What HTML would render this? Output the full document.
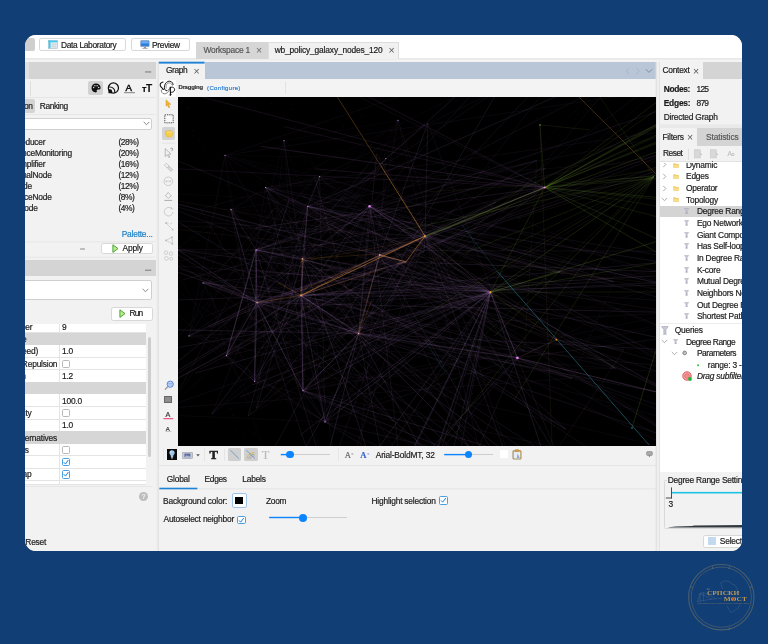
<!DOCTYPE html>
<html lang="en"><head><meta charset="utf-8"><title>Gephi – wb_policy_galaxy_nodes_120</title>
<style>
html,body{margin:0;padding:0;}
body{width:768px;height:644px;background:#113e74;overflow:hidden;position:relative;font-family:"Liberation Sans",sans-serif;font-size:8.4px;color:#1a1a1a;}
#win{position:absolute;left:25px;top:35px;width:717px;height:515.5px;border-radius:11px;overflow:hidden;background:#f2f2f2;}
#in{will-change:transform;}
.t{-webkit-text-stroke:0.18px currentColor;}
#in{position:absolute;left:-25px;top:-35px;width:768px;height:644px;}
#in div,#in svg,.abs{position:absolute;box-sizing:border-box;}
.t{white-space:nowrap;}
.btn{background:#fff;border:0.7px solid #d8d8d8;border-radius:2.2px;}
.cb{background:#fff;border:0.7px solid #b9b9b9;border-radius:1.6px;}
.cbc{background:#fff;border:0.8px solid #4a9fe0;border-radius:1.6px;}
</style></head><body>
<div id="win"><div id="in">
<div style="left:25.00px;top:35.00px;width:718.00px;height:23.20px;background:#fff;"></div>
<svg style="left:24px;top:57px;" width="720" height="4" viewBox="0 0 720 4"><rect x="1.00" y="1.00" width="718.00" height="1.90" fill="#e9e9e9"/></svg>
<svg style="left:24px;top:58px;" width="720" height="6" viewBox="0 0 720 6"><rect x="1.00" y="1.80" width="718.00" height="2.40" fill="#f3f3f3"/></svg>
<div style="left:20.00px;top:38.30px;width:14.80px;height:13.10px;background:#cfcfcf;border-radius:2px;"></div>
<div class="btn" style="left:39.20px;top:38.20px;width:87.10px;height:13.30px;"></div>
<svg style="left:48.00px;top:39.70px;" width="10" height="9" viewBox="0 0 10 9"><rect x="0.3" y="0.3" width="9.4" height="8.4" fill="#e3eaee" stroke="#a4b0b6" stroke-width="0.5"/><rect x="0.6" y="0.6" width="8.8" height="1.7" fill="#3fcaf4"/><rect x="0.6" y="0.6" width="1.9" height="7.8" fill="#3fcaf4"/><path d="M4.8 2.4V8.4M7.1 2.4V8.4M2.5 4.4H9.4M2.5 6.4H9.4" stroke="#c2ccd1" stroke-width="0.4"/></svg>
<div class="t" style="left:60.90px;top:41.10px;font-size:8.4px;line-height:8.4px;letter-spacing:-0.303px;">Data Laboratory</div>
<div class="btn" style="left:130.60px;top:38.20px;width:59.20px;height:13.30px;"></div>
<svg style="left:139.50px;top:40.30px;" width="10" height="10" viewBox="0 0 10 10"><rect x="0.6" y="0.6" width="8.6" height="6" rx="0.6" fill="#2f7fe0" stroke="#8899aa" stroke-width="0.5"/><rect x="1.2" y="1.2" width="7.4" height="2.2" fill="#6fb0f5"/><rect x="3.8" y="6.8" width="2.4" height="1.4" fill="#999"/><rect x="2.4" y="8.1" width="5.2" height="0.9" fill="#aaa"/></svg>
<div class="t" style="left:151.90px;top:41.10px;font-size:8.4px;line-height:8.4px;letter-spacing:-0.263px;">Preview</div>
<div style="left:196.30px;top:41.90px;width:71.70px;height:17.10px;background:#d6d6d6;"></div>
<div class="t" style="left:203.40px;top:46.10px;font-size:8.4px;line-height:8.4px;color:#555;letter-spacing:-0.197px;">Workspace 1</div>
<div class="t" style="left:255.90px;top:45.05px;font-size:10.5px;line-height:10.5px;color:#6a6a6a;-webkit-text-stroke:0;letter-spacing:-0.2px;">×</div>
<div style="left:268.00px;top:41.90px;width:131.40px;height:17.10px;background:#f1f1f1;border:0.6px solid #dddddd;border-bottom:none;"></div>
<div class="t" style="left:274.70px;top:46.10px;font-size:8.4px;line-height:8.4px;letter-spacing:-0.151px;">wb_policy_galaxy_nodes_120</div>
<div class="t" style="left:388.40px;top:45.05px;font-size:10.5px;line-height:10.5px;color:#5a5a5a;-webkit-text-stroke:0;letter-spacing:-0.2px;">×</div>
<div style="left:25.00px;top:62.00px;width:130.60px;height:489.00px;background:#f2f2f2;"></div>
<div style="left:155.80px;top:62.00px;width:1.80px;height:489.00px;background:#efefef;"></div>
<svg style="left:156px;top:61px;" width="4" height="491" viewBox="0 0 4 491"><rect x="1.60" y="1.00" width="1.30" height="489.00" fill="#e2e2e2"/></svg>
<div style="left:29.40px;top:62.20px;width:126.20px;height:17.20px;background:#d4d4d4;"></div>
<div style="left:25.00px;top:62.20px;width:3.60px;height:17.20px;background:#e0e0e0;"></div>
<svg style="left:144px;top:70px;" width="9" height="4" viewBox="0 0 9 4"><rect x="1.00" y="1.30" width="6.30" height="1.30" fill="#8e8e8e"/></svg>
<svg style="left:29px;top:80px;" width="3" height="17" viewBox="0 0 3 17"><rect x="1.20" y="1.50" width="0.70" height="14.50" fill="#d6d6d6"/></svg>
<div style="left:88.10px;top:81.10px;width:14.70px;height:13.90px;background:#d2d2d2;border-radius:2px;"></div>
<svg style="left:90.60px;top:83.10px;" width="10" height="10" viewBox="0 0 10 10"><path d="M5 0.6C2.4 0.6 0.5 2.6 0.5 5c0 2.5 1.9 4.4 4.3 4.4 0.9 0 1.2-0.6 1-1.2-0.3-0.8 0-1.6 1-1.6h1.2c1 0 1.6-0.8 1.6-1.8C9.6 2.4 7.6 0.6 5 0.6z" fill="#111"/><circle cx="2.6" cy="4.6" r="0.75" fill="#d2d2d2"/><circle cx="3.9" cy="2.7" r="0.75" fill="#d2d2d2"/><circle cx="6.1" cy="2.7" r="0.75" fill="#d2d2d2"/><circle cx="7.6" cy="4.4" r="0.75" fill="#d2d2d2"/></svg>
<svg style="left:106.60px;top:81.90px;" width="13" height="12.35" viewBox="0 0 12 11.4"><circle cx="5.9" cy="5.6" r="4.7" fill="none" stroke="#111" stroke-width="1.15"/><path d="M1.3 10.3V7.3a0.6 0.6 0 0 1 0.6-0.6h0.9a2 2 0 0 1 2 2v1.6z" fill="#111"/><path d="M1.6 4.6h1.2a4.4 4.4 0 0 1 4.4 4.4v1.2" fill="none" stroke="#111" stroke-width="1.05"/></svg>
<div class="t" style="left:125.40px;top:82.95px;font-size:9.7px;line-height:9.7px;color:#111;-webkit-text-stroke:0.5px #111;letter-spacing:-0.2px;">A</div>
<svg style="left:123px;top:91px;" width="13" height="4" viewBox="0 0 13 4"><rect x="1.00" y="1.10" width="11.00" height="1.10" fill="#8c8c8c"/></svg>
<div class="t" style="left:142.00px;top:84.70px;font-size:9.2px;line-height:9.2px;font-weight:bold;color:#111;letter-spacing:-0.2px;">т</div>
<div class="t" style="left:146.00px;top:83.75px;font-size:10.1px;line-height:10.1px;font-weight:bold;color:#111;letter-spacing:-0.2px;">T</div>
<svg style="left:24px;top:96px;" width="133" height="3" viewBox="0 0 133 3"><rect x="1.00" y="1.00" width="130.60" height="0.60" fill="#dedede"/></svg>
<div style="left:20.00px;top:98.80px;width:15.00px;height:13.80px;background:#d4d4d4;border-radius:2px;"></div>
<div class="t" style="right:735.20px;top:102.10px;font-size:8.4px;line-height:8.4px;letter-spacing:-0.2px;">Partition</div>
<div class="t" style="left:39.80px;top:102.10px;font-size:8.4px;line-height:8.4px;letter-spacing:-0.387px;">Ranking</div>
<svg style="left:24px;top:113px;" width="133" height="3" viewBox="0 0 133 3"><rect x="1.00" y="1.00" width="130.60" height="0.60" fill="#dedede"/></svg>
<div style="left:20.00px;top:117.60px;width:132.40px;height:12.70px;background:#fff;border:0.6px solid #cfcfcf;border-radius:2px;"></div>
<svg style="left:142.60px;top:121.40px;" width="7" height="5" viewBox="0 0 7 5"><path d="M0.7 0.9L3.5 3.7L6.3 0.9" fill="none" stroke="#555" stroke-width="0.7"/></svg>
<div class="t" style="right:722.60px;top:138.10px;font-size:8.4px;line-height:8.4px;letter-spacing:-0.2px;">Producer</div>
<div class="t" style="left:118.50px;top:138.10px;font-size:8.4px;line-height:8.4px;letter-spacing:-0.427px;">(28%)</div>
<div class="t" style="right:696.00px;top:149.10px;font-size:8.4px;line-height:8.4px;letter-spacing:-0.2px;">ComplianceMonitoring</div>
<div class="t" style="left:118.50px;top:149.10px;font-size:8.4px;line-height:8.4px;letter-spacing:-0.427px;">(20%)</div>
<div class="t" style="right:722.60px;top:160.10px;font-size:8.4px;line-height:8.4px;letter-spacing:-0.2px;">Amplifier</div>
<div class="t" style="left:118.50px;top:160.10px;font-size:8.4px;line-height:8.4px;letter-spacing:-0.427px;">(16%)</div>
<div class="t" style="right:716.30px;top:171.10px;font-size:8.4px;line-height:8.4px;letter-spacing:-0.2px;">TerminalNode</div>
<div class="t" style="left:118.50px;top:171.10px;font-size:8.4px;line-height:8.4px;letter-spacing:-0.427px;">(12%)</div>
<div class="t" style="right:736.10px;top:182.10px;font-size:8.4px;line-height:8.4px;letter-spacing:-0.2px;">Node</div>
<div class="t" style="left:118.50px;top:182.10px;font-size:8.4px;line-height:8.4px;letter-spacing:-0.427px;">(12%)</div>
<div class="t" style="right:716.30px;top:193.10px;font-size:8.4px;line-height:8.4px;letter-spacing:-0.2px;">SourceNode</div>
<div class="t" style="left:118.50px;top:193.10px;font-size:8.4px;line-height:8.4px;letter-spacing:-0.479px;">(8%)</div>
<div class="t" style="right:730.30px;top:204.10px;font-size:8.4px;line-height:8.4px;letter-spacing:-0.2px;">Anode</div>
<div class="t" style="left:118.50px;top:204.10px;font-size:8.4px;line-height:8.4px;letter-spacing:-0.479px;">(4%)</div>
<div class="t" style="left:121.70px;top:230.10px;font-size:8.4px;line-height:8.4px;color:#1b7fc4;letter-spacing:-0.206px;">Palette...</div>
<svg style="left:24px;top:240px;" width="133" height="4" viewBox="0 0 133 4"><rect x="1.00" y="1.60" width="130.60" height="0.60" fill="#dedede"/></svg>
<div style="left:79.80px;top:247.80px;width:4.80px;height:2.60px;background:#bdbdbd;border-radius:0.6px;"></div>
<div class="btn" style="left:101.20px;top:243.10px;width:51.40px;height:11.40px;"></div>
<svg style="left:112.20px;top:243.50px;" width="7" height="9.2" viewBox="0 0 7 9.2"><path d="M0.9 0.8L6 4.6L0.9 8.4z" fill="#b9f08a" stroke="#3c9a2c" stroke-width="0.9" stroke-linejoin="round"/></svg>
<div class="t" style="left:122.50px;top:244.10px;font-size:8.4px;line-height:8.4px;letter-spacing:-0.128px;">Apply</div>
<svg style="left:24px;top:255px;" width="133" height="4" viewBox="0 0 133 4"><rect x="1.00" y="1.80" width="130.60" height="0.60" fill="#dedede"/></svg>
<div style="left:25.00px;top:260.00px;width:130.60px;height:16.30px;background:#d4d4d4;"></div>
<svg style="left:144px;top:268px;" width="9" height="4" viewBox="0 0 9 4"><rect x="1.00" y="1.60" width="6.30" height="1.30" fill="#8e8e8e"/></svg>
<div style="left:20.00px;top:280.40px;width:132.40px;height:19.80px;background:#fff;border:0.6px solid #cfcfcf;border-radius:2px;"></div>
<svg style="left:142.00px;top:288.00px;" width="7" height="5" viewBox="0 0 7 5"><path d="M0.7 0.9L3.5 3.7L6.3 0.9" fill="none" stroke="#555" stroke-width="0.7"/></svg>
<div class="btn" style="left:111.20px;top:307.00px;width:41.40px;height:13.60px;"></div>
<svg style="left:118.50px;top:308.60px;" width="7" height="9.2" viewBox="0 0 7 9.2"><path d="M0.9 0.8L6 4.6L0.9 8.4z" fill="#b9f08a" stroke="#3c9a2c" stroke-width="0.9" stroke-linejoin="round"/></svg>
<div class="t" style="left:129.40px;top:309.10px;font-size:8.4px;line-height:8.4px;letter-spacing:-0.755px;">Run</div>
<div style="left:25.00px;top:323.50px;width:121.00px;height:161.10px;background:#fff;"></div>
<div style="left:25.00px;top:332.40px;width:121.00px;height:0.50px;background:#e4e4e4;"></div>
<div style="left:59.40px;top:323.50px;width:0.50px;height:9.40px;background:#e4e4e4;"></div>
<div class="t" style="right:735.60px;top:323.10px;font-size:8.4px;line-height:8.4px;letter-spacing:-0.2px;">Threads number</div>
<div class="t" style="left:62.00px;top:323.10px;font-size:8.4px;line-height:8.4px;letter-spacing:-0.2px;">9</div>
<div style="left:25.00px;top:332.90px;width:121.00px;height:12.30px;background:#d6d6d6;"></div>
<div class="t" style="right:741.50px;top:335.10px;font-size:8.4px;line-height:8.4px;letter-spacing:-0.2px;">Performance</div>
<div style="left:25.00px;top:357.00px;width:121.00px;height:0.50px;background:#e4e4e4;"></div>
<div style="left:59.40px;top:345.20px;width:0.50px;height:12.30px;background:#e4e4e4;"></div>
<div class="t" style="right:730.00px;top:347.10px;font-size:8.4px;line-height:8.4px;letter-spacing:-0.2px;">Tolerance (speed)</div>
<div class="t" style="left:62.00px;top:347.10px;font-size:8.4px;line-height:8.4px;letter-spacing:-0.2px;">1.0</div>
<div style="left:25.00px;top:369.30px;width:121.00px;height:0.50px;background:#e4e4e4;"></div>
<div style="left:59.40px;top:357.50px;width:0.50px;height:12.30px;background:#e4e4e4;"></div>
<div class="t" style="right:710.70px;top:360.10px;font-size:8.4px;line-height:8.4px;letter-spacing:-0.2px;">Approximate Repulsion</div>
<div class="cb" style="left:61.90px;top:359.70px;width:8.20px;height:8.20px;"></div>
<div style="left:25.00px;top:381.60px;width:121.00px;height:0.50px;background:#e4e4e4;"></div>
<div style="left:59.40px;top:369.80px;width:0.50px;height:12.30px;background:#e4e4e4;"></div>
<div class="t" style="right:742.40px;top:372.10px;font-size:8.4px;line-height:8.4px;letter-spacing:-0.2px;">Approximation</div>
<div class="t" style="left:62.00px;top:372.10px;font-size:8.4px;line-height:8.4px;letter-spacing:-0.2px;">1.2</div>
<div style="left:25.00px;top:382.10px;width:121.00px;height:12.30px;background:#d6d6d6;"></div>
<div class="t" style="right:746.00px;top:384.10px;font-size:8.4px;line-height:8.4px;letter-spacing:-0.2px;">Tuning</div>
<div style="left:25.00px;top:406.20px;width:121.00px;height:0.50px;background:#e4e4e4;"></div>
<div style="left:59.40px;top:394.40px;width:0.50px;height:12.30px;background:#e4e4e4;"></div>
<div class="t" style="right:746.00px;top:397.10px;font-size:8.4px;line-height:8.4px;letter-spacing:-0.2px;">Scaling</div>
<div class="t" style="left:62.00px;top:397.10px;font-size:8.4px;line-height:8.4px;letter-spacing:-0.2px;">100.0</div>
<div style="left:25.00px;top:418.50px;width:121.00px;height:0.50px;background:#e4e4e4;"></div>
<div style="left:59.40px;top:406.70px;width:0.50px;height:12.30px;background:#e4e4e4;"></div>
<div class="t" style="right:736.50px;top:409.10px;font-size:8.4px;line-height:8.4px;letter-spacing:-0.2px;">Stronger Gravity</div>
<div class="cb" style="left:61.90px;top:408.90px;width:8.20px;height:8.20px;"></div>
<div style="left:25.00px;top:430.80px;width:121.00px;height:0.50px;background:#e4e4e4;"></div>
<div style="left:59.40px;top:419.00px;width:0.50px;height:12.30px;background:#e4e4e4;"></div>
<div class="t" style="right:746.00px;top:421.10px;font-size:8.4px;line-height:8.4px;letter-spacing:-0.2px;">Gravity</div>
<div class="t" style="left:62.00px;top:421.10px;font-size:8.4px;line-height:8.4px;letter-spacing:-0.2px;">1.0</div>
<div style="left:25.00px;top:431.30px;width:121.00px;height:12.30px;background:#d6d6d6;"></div>
<div class="t" style="right:711.00px;top:434.10px;font-size:8.4px;line-height:8.4px;letter-spacing:-0.2px;">Behavior Alternatives</div>
<div style="left:25.00px;top:455.40px;width:121.00px;height:0.50px;background:#e4e4e4;"></div>
<div style="left:59.40px;top:443.60px;width:0.50px;height:12.30px;background:#e4e4e4;"></div>
<div class="t" style="right:739.20px;top:446.10px;font-size:8.4px;line-height:8.4px;letter-spacing:-0.2px;">Dissuade Hubs</div>
<div class="cb" style="left:61.90px;top:445.80px;width:8.20px;height:8.20px;"></div>
<div style="left:25.00px;top:467.70px;width:121.00px;height:0.50px;background:#e4e4e4;"></div>
<div style="left:59.40px;top:455.90px;width:0.50px;height:12.30px;background:#e4e4e4;"></div>
<div class="t" style="right:746.00px;top:458.10px;font-size:8.4px;line-height:8.4px;letter-spacing:-0.2px;">LinLog mode</div>
<div class="cbc" style="left:61.90px;top:458.10px;width:8.20px;height:8.20px;"></div>
<svg style="left:61.90px;top:458.10px;" width="8.2" height="8.2" viewBox="0 0 8.2 8.2"><path d="M1.9 4.3L3.5 6.1L6.4 2" fill="none" stroke="#1a84e6" stroke-width="1"/></svg>
<div style="left:25.00px;top:480.00px;width:121.00px;height:0.50px;background:#e4e4e4;"></div>
<div style="left:59.40px;top:468.20px;width:0.50px;height:12.30px;background:#e4e4e4;"></div>
<div class="t" style="right:736.50px;top:470.10px;font-size:8.4px;line-height:8.4px;letter-spacing:-0.2px;">Prevent Overlap</div>
<div class="cbc" style="left:61.90px;top:470.40px;width:8.20px;height:8.20px;"></div>
<svg style="left:61.90px;top:470.40px;" width="8.2" height="8.2" viewBox="0 0 8.2 8.2"><path d="M1.9 4.3L3.5 6.1L6.4 2" fill="none" stroke="#1a84e6" stroke-width="1"/></svg>
<div style="left:25.00px;top:484.10px;width:121.00px;height:0.50px;background:#e4e4e4;"></div>
<div style="left:59.40px;top:480.50px;width:0.50px;height:4.10px;background:#e4e4e4;"></div>
<div style="left:25px;top:480.50px;width:121px;height:4.10px;overflow:hidden;"><div class="t" style="right:115.00px;top:3.03px;font-size:8.4px;line-height:8.4px;">Edge Weight Influence</div><div class="t" style="left:37.00px;top:3.03px;font-size:8.4px;line-height:8.4px;">1.0</div></div>
<div style="left:147.80px;top:336.80px;width:3.00px;height:119.80px;background:#cdcdcd;border-radius:1.5px;"></div>
<svg style="left:24px;top:485px;" width="130" height="3" viewBox="0 0 130 3"><rect x="1.00" y="1.40" width="127.40" height="0.60" fill="#dedede"/></svg>
<div style="left:139.00px;top:491.50px;width:9.00px;height:9.00px;background:#bdbdbd;border-radius:50%;"></div>
<div class="t" style="left:141.60px;top:493.30px;font-size:7px;line-height:7px;color:#e8e8e8;font-weight:bold;">?</div>
<div class="t" style="left:25.30px;top:538.10px;font-size:8.4px;line-height:8.4px;letter-spacing:-0.2px;">Reset</div>
<div style="left:158.80px;top:62.00px;width:497.20px;height:17.40px;background:#b8c6d7;"></div>
<div style="left:158.80px;top:62.00px;width:45.80px;height:17.40px;background:#f2f2f2;"></div>
<svg style="left:157px;top:60px;" width="49" height="5" viewBox="0 0 49 5"><rect x="1.80" y="1.70" width="45.80" height="1.90" fill="#1b82d6"/></svg>
<div class="t" style="left:166.00px;top:66.10px;font-size:8.4px;line-height:8.4px;letter-spacing:-0.412px;">Graph</div>
<div class="t" style="left:193.50px;top:66.05px;font-size:10.5px;line-height:10.5px;color:#5a5a5a;-webkit-text-stroke:0;letter-spacing:-0.2px;">×</div>
<svg style="left:623.50px;top:66.50px;" width="30" height="8" viewBox="0 0 30 8"><path d="M5.4 0.8L2.2 4L5.4 7.2" fill="none" stroke="#a3b3c6" stroke-width="0.8"/><path d="M12 0.8L15.2 4L12 7.2" fill="none" stroke="#a3b3c6" stroke-width="0.8"/><path d="M21.8 2.2L25 5.4L28.2 2.2" fill="none" stroke="#6e7f92" stroke-width="0.8"/></svg>
<div style="left:158.80px;top:79.40px;width:497.20px;height:17.70px;background:#f3f3f3;"></div>
<div style="left:159.90px;top:79.90px;width:16.10px;height:16.70px;background:#fff;"></div>
<svg style="left:158.00px;top:78.00px;" width="20" height="20" viewBox="0 0 20 20"><g fill="none" stroke="#151515" stroke-linecap="round"><path d="M5 4C3.2 4.6 1.8 6.2 2.4 8C2.9 9.4 4.4 10.2 5.4 11.4" stroke-width="1.05"/><path d="M5.4 11.4C3.6 10.6 2.8 12.4 3.6 14.2C4.6 16.2 7.8 16.4 9.6 14.6C10.6 13.6 11.2 12.4 11.6 11.2" stroke-width="0.5"/><path d="M15.2 6.6C15 4 12.4 2.6 10 3.4C7.6 4.4 6.2 7.2 6.4 9.8C6.5 11.6 7.4 12.6 8.6 12.8" stroke-width="0.95"/><path d="M14.4 7.4C13.6 5 11.4 4.2 9.6 5.4C8.2 6.4 7.6 8.4 8.2 10.2" stroke-width="0.45"/><path d="M12.3 9.2L12.5 17.2" stroke-width="1.15"/><path d="M12.4 9.6C14.4 8.4 16.8 9.6 16.6 11.8C16.4 13.8 14.4 14.8 12.6 14.2" stroke-width="0.95"/><path d="M8.6 12.8C10 12.6 11.4 10.8 12.3 9.2M11.2 17L13.6 16.4" stroke-width="0.5"/></g></svg>
<div class="t" style="left:178.40px;top:85.35px;font-size:5.9px;line-height:5.9px;font-weight:bold;color:#333;letter-spacing:-0.171px;">Dragging</div>
<div class="t" style="left:207.10px;top:85.27px;font-size:6.05px;line-height:6.05px;color:#2d7fd0;letter-spacing:0.304px;">(Configure)</div>
<svg style="left:284px;top:80px;" width="3" height="15" viewBox="0 0 3 15"><rect x="1.40" y="1.50" width="0.60" height="12.50" fill="#d9d9d9"/></svg>
<div style="left:158.80px;top:97.10px;width:19.20px;height:348.50px;background:#f2f2f2;"></div>
<svg style="left:165.00px;top:99.20px;" width="7" height="10" viewBox="0 0 7 10"><path d="M1 0.8L1 7.2L2.5 5.9L3.7 8.8L4.8 8.3L3.6 5.5L5.8 5.3z" fill="#f4b62c" stroke="#c9923a" stroke-width="0.45" stroke-linejoin="round"/></svg>
<svg style="left:163.50px;top:114.00px;" width="10" height="10" viewBox="0 0 10 10"><rect x="0.8" y="0.8" width="8.4" height="8" fill="#f9f9f9" stroke="#222" stroke-width="0.8" stroke-dasharray="1.3 0.9"/></svg>
<div style="left:162.30px;top:127.00px;width:12.90px;height:13.00px;background:#d3d3d3;border-radius:2px;"></div>
<svg style="left:164.20px;top:129.40px;" width="10" height="9" viewBox="0 0 10 9"><path d="M1.2 3.6C0.8 2.6 1.8 2 2.5 2.7C2.4 1.4 3.8 1 4.3 1.9C4.8 0.9 6.2 1 6.4 2C7 1.4 8.2 1.8 8.1 2.9C8.9 3 9.2 3.8 8.8 4.6L8.2 6.6C8 7.6 7.2 8.1 6.2 8.1L4.2 8.1C3 8.1 2.2 7.4 1.8 6.2z" fill="#f5cc44" stroke="#dcae32" stroke-width="0.45"/><path d="M3 3.4C4.4 3 6.4 3.1 7.6 3.6" stroke="#fbe9a4" stroke-width="0.7" fill="none"/></svg>
<svg style="left:161px;top:141px;" width="16" height="4" viewBox="0 0 16 4"><rect x="1.30" y="1.80" width="12.90" height="0.60" fill="#dcdcdc"/></svg>
<svg style="left:163.60px;top:146.60px;" width="11" height="12" viewBox="0 0 11 12"><path d="M1.2 1.6L1.2 9.6L3.4 7.8L4.8 10.6L5.8 10.1L4.5 7.4L7 7z" fill="#eee" stroke="#999" stroke-width="0.6"/><path d="M6.6 2.2c0-1.4 2.2-1.4 2.2 0 0 0.9-1.1 0.9-1.1 1.9" fill="none" stroke="#777" stroke-width="0.7"/></svg>
<svg style="left:163.40px;top:161.50px;" width="11" height="11" viewBox="0 0 11 11"><path d="M1.4 3.2L3.4 1.2L6.2 4L4.2 6z" fill="none" stroke="#b5b5b5" stroke-width="0.7"/><path d="M4.6 6.2L6.4 4.4L9.6 7.6L8 9.4z" fill="#ddd" stroke="#b5b5b5" stroke-width="0.7"/></svg>
<svg style="left:163.40px;top:176.40px;" width="11" height="11" viewBox="0 0 11 11"><circle cx="5.3" cy="5.3" r="4.3" fill="none" stroke="#bbb" stroke-width="0.7"/><path d="M2.6 5.3H8M2.6 5.3l1-0.9M2.6 5.3l1 0.9M8 5.3l-1-0.9M8 5.3l-1 0.9" stroke="#bbb" stroke-width="0.6" fill="none"/></svg>
<svg style="left:163.40px;top:191.40px;" width="11" height="11" viewBox="0 0 11 11"><path d="M5.2 1.4L8.4 5L5.4 7.2L2.4 5z" fill="none" stroke="#aaa" stroke-width="0.7"/><path d="M1.4 9.4H9.2" stroke="#999" stroke-width="0.8"/></svg>
<svg style="left:163.20px;top:205.60px;" width="12" height="12" viewBox="0 0 12 12"><path d="M8.6 2.6A4.3 4.3 0 1 0 9.9 6.2" fill="none" stroke="#bbb" stroke-width="0.7"/><path d="M8.4 0.8V2.9H10.4" fill="none" stroke="#bbb" stroke-width="0.6"/></svg>
<svg style="left:163.60px;top:220.60px;" width="11" height="11" viewBox="0 0 11 11"><path d="M2 2L8.6 8.6M2 2l2.6 0.2M6 3.2l2.2-1.4" stroke="#bbb" stroke-width="0.6" fill="none"/><circle cx="2" cy="2" r="0.9" fill="#bbb"/><circle cx="8.6" cy="8.6" r="0.9" fill="#bbb"/></svg>
<svg style="left:163.60px;top:235.40px;" width="11" height="11" viewBox="0 0 11 11"><path d="M2 5.4L8 2.2M2 5.4L8.4 8.8M8 2.2l0.4 6.6" stroke="#bbb" stroke-width="0.6" fill="none"/><circle cx="2" cy="5.4" r="0.9" fill="#bbb"/><circle cx="8" cy="2.2" r="0.9" fill="#bbb"/><circle cx="8.4" cy="8.8" r="0.9" fill="#bbb"/></svg>
<svg style="left:163.40px;top:250.00px;" width="11" height="12" viewBox="0 0 11 12"><circle cx="3" cy="2.6" r="1.7" fill="none" stroke="#bbb" stroke-width="0.6"/><circle cx="8" cy="3.6" r="1.7" fill="none" stroke="#bbb" stroke-width="0.6"/><circle cx="3.4" cy="8.4" r="1.9" fill="none" stroke="#bbb" stroke-width="0.6"/><circle cx="8.2" cy="8.8" r="1.5" fill="none" stroke="#bbb" stroke-width="0.6"/></svg>
<svg style="left:163.80px;top:379.60px;" width="11" height="11" viewBox="0 0 11 11"><circle cx="6.2" cy="4.2" r="3.1" fill="#cfe0fb" stroke="#4a78d8" stroke-width="0.9"/><path d="M4.2 3.4H8.2M4.2 5H8.2" stroke="#4a78d8" stroke-width="0.5"/><path d="M3.8 6.6L1 9.6" stroke="#8b8b8b" stroke-width="1.2"/></svg>
<div style="left:164.40px;top:396.20px;width:7.60px;height:7.20px;background:#8e8e8e;border:0.6px solid #666;"></div>
<div class="t" style="left:165.60px;top:411.20px;font-size:7.2px;line-height:7.2px;color:#333;">A</div>
<svg style="left:162px;top:417px;" width="13" height="4" viewBox="0 0 13 4"><rect x="1.40" y="1.20" width="9.80" height="1.00" fill="#e8336d"/></svg>
<div class="t" style="left:165.80px;top:426.30px;font-size:6px;line-height:6px;color:#333;">A</div>
<svg style="left:164px;top:430px;" width="9" height="3" viewBox="0 0 9 3"><rect x="1.40" y="1.20" width="6.00" height="0.60" fill="#aaa"/></svg>
<div style="left:158.80px;top:445.60px;width:497.20px;height:19.60px;background:#f2f2f2;"></div>
<svg style="left:157px;top:464px;" width="500" height="3" viewBox="0 0 500 3"><rect x="1.80" y="1.20" width="497.20" height="0.60" fill="#dcdcdc"/></svg>
<svg style="left:162px;top:447px;" width="3" height="15" viewBox="0 0 3 15"><rect x="1.00" y="1.40" width="0.50" height="12.60" fill="#dcdcdc"/></svg>
<div style="left:166.70px;top:449.00px;width:10.10px;height:10.60px;background:#0a0a0a;"></div>
<svg style="left:166.70px;top:449.00px;" width="10.1" height="10.6" viewBox="0 0 10.1 10.6"><path d="M5 1.2c-1.7 0-2.7 1.2-2.7 2.5 0 1.1 0.8 1.7 1.3 2.6L4 8.8h2l0.4-2.5c0.5-0.9 1.3-1.5 1.3-2.6 0-1.3-1-2.5-2.7-2.5z" fill="#9fc6e8"/><path d="M5 1.9c-0.9 0-1.6 0.8-1.6 1.7" stroke="#fff" stroke-width="0.6" fill="none"/><path d="M4.2 9.4h1.6" stroke="#ccc" stroke-width="0.6"/></svg>
<svg style="left:182.20px;top:451.60px;" width="11" height="7" viewBox="0 0 11 7"><rect x="0.3" y="0.3" width="10.2" height="6.2" rx="0.6" fill="#c9ccd6" stroke="#8a8f9c" stroke-width="0.5"/><rect x="2.4" y="1.6" width="6" height="3.6" fill="#5b6d9a"/><path d="M2.6 5l2-2 1.4 1.2 1-0.8 1.2 1.6z" fill="#a8b6da"/></svg>
<svg style="left:196.00px;top:453.60px;" width="4" height="3" viewBox="0 0 4 3"><path d="M0.2 0.3H3.8L2 2.6z" fill="#555"/></svg>
<svg style="left:203px;top:447px;" width="3" height="15" viewBox="0 0 3 15"><rect x="1.40" y="1.40" width="0.60" height="12.60" fill="#dcdcdc"/></svg>
<div class="t" style="left:209.40px;top:449.00px;font-size:12.6px;line-height:12.6px;font-family:'Liberation Serif',serif;font-weight:bold;color:#222;-webkit-text-stroke:0.55px #222;">T</div>
<svg style="left:223px;top:447px;" width="3" height="15" viewBox="0 0 3 15"><rect x="1.20" y="1.40" width="0.60" height="12.60" fill="#dcdcdc"/></svg>
<div style="left:228.00px;top:447.80px;width:13.30px;height:13.00px;background:#cfcfcf;border-radius:1.6px;"></div>
<svg style="left:228.00px;top:447.80px;" width="13.3" height="13" viewBox="0 0 13.3 13"><path d="M2.4 2.2L10.8 10.6" stroke="#5d97c9" stroke-width="0.8"/></svg>
<div style="left:244.20px;top:447.80px;width:13.50px;height:13.00px;background:#cfcfcf;border-radius:1.6px;"></div>
<svg style="left:244.20px;top:447.80px;" width="13.5" height="13" viewBox="0 0 13.5 13"><path d="M3 10.8C3.4 7 6 4.6 10.4 4.8" stroke="#e8a33a" stroke-width="0.8" fill="none"/><path d="M4.6 10.8C5 8 7 6.4 10.4 6.4" stroke="#7cc46a" stroke-width="0.8" fill="none"/><path d="M6.2 10.8C6.6 9 8 8 10.4 8" stroke="#d978c8" stroke-width="0.8" fill="none"/><path d="M2.4 2.2L10.8 10.6" stroke="#5d97c9" stroke-width="0.8"/></svg>
<div class="t" style="left:261.80px;top:449.10px;font-size:12.4px;line-height:12.4px;font-family:'Liberation Serif',serif;color:#bdbdbd;">T</div>
<svg style="left:279px;top:453px;" width="52" height="3" viewBox="0 0 52 3"><rect x="1.80" y="1.20" width="49.20" height="0.80" fill="#c4c4c4"/></svg>
<svg style="left:279px;top:452px;" width="12" height="5" viewBox="0 0 12 5"><rect x="1.80" y="1.90" width="9.20" height="1.40" fill="#0a84ff"/></svg>
<div style="left:286.40px;top:450.90px;width:7.40px;height:7.40px;background:#0a84ff;border-radius:50%;"></div>
<svg style="left:337px;top:447px;" width="3" height="15" viewBox="0 0 3 15"><rect x="1.20" y="1.40" width="0.60" height="12.60" fill="#dcdcdc"/></svg>
<div class="t" style="left:344.80px;top:451.00px;font-size:8.6px;line-height:8.6px;font-family:'Liberation Serif',serif;color:#666;">A</div>
<svg style="left:350px;top:452px;" width="5" height="4" viewBox="0 0 5 4"><rect x="1.40" y="1.60" width="1.80" height="0.70" fill="#666"/></svg>
<div class="t" style="left:360.20px;top:451.00px;font-size:8.6px;line-height:8.6px;font-family:'Liberation Serif',serif;font-weight:bold;color:#3d62d8;">A</div>
<svg style="left:366px;top:452px;" width="5" height="4" viewBox="0 0 5 4"><rect x="1.40" y="1.60" width="1.80" height="0.70" fill="#3d62d8"/></svg>
<div class="t" style="left:375.80px;top:451.10px;font-size:8.4px;line-height:8.4px;letter-spacing:-0.162px;">Arial-BoldMT, 32</div>
<svg style="left:443px;top:453px;" width="51" height="3" viewBox="0 0 51 3"><rect x="1.20" y="1.20" width="48.80" height="0.80" fill="#c4c4c4"/></svg>
<svg style="left:443px;top:452px;" width="27" height="5" viewBox="0 0 27 5"><rect x="1.20" y="1.90" width="24.40" height="1.40" fill="#0a84ff"/></svg>
<div style="left:465.00px;top:450.90px;width:7.40px;height:7.40px;background:#0a84ff;border-radius:50%;"></div>
<div style="left:499.60px;top:449.80px;width:8.80px;height:8.40px;background:#fff;"></div>
<svg style="left:512.00px;top:448.80px;" width="11" height="11" viewBox="0 0 11 11"><rect x="0.8" y="1.6" width="8.4" height="8.6" rx="0.6" fill="#c7b07a" stroke="#8b7a55" stroke-width="0.5"/><rect x="1.9" y="2.8" width="6.2" height="6.6" fill="#e8eef8"/><rect x="3.2" y="0.6" width="3.6" height="2" rx="0.5" fill="#e5a53a" stroke="#9a7a35" stroke-width="0.4"/><path d="M5.6 4.6l2.2 4.6h-3z" fill="#8ea6cf"/></svg>
<svg style="left:646.40px;top:450.80px;" width="7" height="7" viewBox="0 0 7 7"><rect x="0.6" y="0.6" width="5.8" height="3.8" rx="0.8" fill="#aaa" stroke="#777" stroke-width="0.5"/><path d="M2.4 4.6L3.5 6.2L4.6 4.6z" fill="#777"/></svg>
<div style="left:158.80px;top:465.80px;width:497.20px;height:85.20px;background:#f2f2f2;"></div>
<div class="t" style="left:166.70px;top:475.10px;font-size:8.4px;line-height:8.4px;letter-spacing:-0.196px;">Global</div>
<div class="t" style="left:204.60px;top:475.10px;font-size:8.4px;line-height:8.4px;letter-spacing:-0.355px;">Edges</div>
<div class="t" style="left:242.30px;top:475.10px;font-size:8.4px;line-height:8.4px;letter-spacing:-0.211px;">Labels</div>
<svg style="left:157px;top:487px;" width="500" height="4" viewBox="0 0 500 4"><rect x="1.80" y="1.60" width="497.20" height="0.60" fill="#dcdcdc"/></svg>
<svg style="left:158px;top:486px;" width="41" height="5" viewBox="0 0 41 5"><rect x="1.40" y="1.70" width="38.00" height="1.60" fill="#1b82d6"/></svg>
<div class="t" style="left:163.10px;top:497.10px;font-size:8.4px;line-height:8.4px;letter-spacing:-0.207px;">Background color:</div>
<div style="left:232.30px;top:493.00px;width:14.30px;height:14.70px;background:#fff;border:0.7px solid #9dc4ea;border-radius:2px;"></div>
<div style="left:235.20px;top:496.60px;width:8.00px;height:7.50px;background:#000;"></div>
<div class="t" style="left:266.00px;top:497.10px;font-size:8.4px;line-height:8.4px;letter-spacing:-0.324px;">Zoom</div>
<div class="t" style="left:371.50px;top:497.10px;font-size:8.4px;line-height:8.4px;letter-spacing:-0.204px;">Highlight selection</div>
<div class="cbc" style="left:439.20px;top:496.30px;width:8.70px;height:8.30px;"></div>
<svg style="left:439.20px;top:496.30px;" width="8.7" height="8.3" viewBox="0 0 8.7 8.3"><path d="M2 4.4L3.7 6.2L6.8 2" fill="none" stroke="#1a84e6" stroke-width="1"/></svg>
<div class="t" style="left:163.50px;top:515.10px;font-size:8.4px;line-height:8.4px;letter-spacing:-0.186px;">Autoselect neighbor</div>
<div class="cbc" style="left:237.40px;top:515.60px;width:8.50px;height:8.30px;"></div>
<svg style="left:237.40px;top:515.60px;" width="8.5" height="8.3" viewBox="0 0 8.5 8.3"><path d="M2 4.4L3.7 6.2L6.7 2" fill="none" stroke="#1a84e6" stroke-width="1"/></svg>
<svg style="left:268px;top:516px;" width="80" height="3" viewBox="0 0 80 3"><rect x="1.20" y="1.10" width="77.80" height="0.80" fill="#c4c4c4"/></svg>
<svg style="left:268px;top:515px;" width="36" height="5" viewBox="0 0 36 5"><rect x="1.20" y="1.80" width="33.80" height="1.40" fill="#0a84ff"/></svg>
<div style="left:299.00px;top:513.50px;width:8.00px;height:8.00px;background:#0a84ff;border-radius:50%;"></div>
<div style="left:655.60px;top:62.00px;width:4.00px;height:489.00px;background:#efefef;"></div>
<svg style="left:654px;top:61px;" width="4" height="491" viewBox="0 0 4 491"><rect x="1.60" y="1.00" width="1.40" height="489.00" fill="#e2e2e2"/></svg>
<div style="left:659.60px;top:62.00px;width:83.40px;height:489.00px;background:#f2f2f2;"></div>
<div style="left:659.60px;top:62.00px;width:83.40px;height:17.40px;background:#d4d4d4;"></div>
<div style="left:659.60px;top:62.00px;width:43.20px;height:17.40px;background:#f2f2f2;"></div>
<div class="t" style="left:662.40px;top:66.10px;font-size:8.4px;line-height:8.4px;letter-spacing:-0.225px;">Context</div>
<div class="t" style="left:693.00px;top:66.05px;font-size:10.5px;line-height:10.5px;color:#5a5a5a;-webkit-text-stroke:0;letter-spacing:-0.2px;">×</div>
<div class="t" style="left:663.70px;top:85.10px;font-size:8.4px;line-height:8.4px;font-weight:bold;letter-spacing:-0.354px;">Nodes:</div>
<div class="t" style="left:696.60px;top:85.10px;font-size:8.4px;line-height:8.4px;letter-spacing:-0.808px;">125</div>
<div class="t" style="left:663.70px;top:99.10px;font-size:8.4px;line-height:8.4px;font-weight:bold;letter-spacing:-0.2px;">Edges:</div>
<div class="t" style="left:696.60px;top:99.10px;font-size:8.4px;line-height:8.4px;letter-spacing:-0.808px;">879</div>
<div class="t" style="left:663.70px;top:113.10px;font-size:8.4px;line-height:8.4px;letter-spacing:-0.205px;">Directed Graph</div>
<svg style="left:658px;top:123px;" width="86" height="4" viewBox="0 0 86 4"><rect x="1.60" y="1.80" width="83.40" height="0.60" fill="#d8d8d8"/></svg>
<div style="left:659.60px;top:125.40px;width:83.40px;height:3.00px;background:#e9e9e9;"></div>
<svg style="left:658px;top:127px;" width="86" height="3" viewBox="0 0 86 3"><rect x="1.20" y="1.20" width="83.80" height="0.60" fill="#d6d6d6"/></svg>
<svg style="left:658px;top:61px;" width="3" height="491" viewBox="0 0 3 491"><rect x="1.10" y="1.00" width="0.60" height="489.00" fill="#dadada"/></svg>
<div style="left:659.60px;top:128.40px;width:83.40px;height:17.40px;background:#d4d4d4;"></div>
<div style="left:659.60px;top:128.40px;width:37.20px;height:17.40px;background:#f2f2f2;"></div>
<div class="t" style="left:662.40px;top:133.10px;font-size:8.4px;line-height:8.4px;letter-spacing:-0.2px;">Filters</div>
<div class="t" style="left:687.00px;top:132.05px;font-size:10.5px;line-height:10.5px;color:#5a5a5a;-webkit-text-stroke:0;letter-spacing:-0.2px;">×</div>
<div class="t" style="left:705.90px;top:133.10px;font-size:8.4px;line-height:8.4px;color:#555;letter-spacing:-0.079px;">Statistics</div>
<div class="t" style="left:662.90px;top:149.10px;font-size:8.4px;line-height:8.4px;letter-spacing:-0.461px;">Reset</div>
<svg style="left:687px;top:147px;" width="3" height="14" viewBox="0 0 3 14"><rect x="1.30" y="1.50" width="0.60" height="11.50" fill="#d6d6d6"/></svg>
<svg style="left:693.60px;top:149.20px;" width="9" height="10" viewBox="0 0 9 10"><rect x="0.6" y="0.8" width="5.6" height="8" fill="#d9d9d9" stroke="#c4c4c4" stroke-width="0.6"/><path d="M6.2 3.4L8.4 5.2L6.2 7z" fill="#c9c9c9"/></svg>
<svg style="left:709.60px;top:149.20px;" width="9" height="10" viewBox="0 0 9 10"><rect x="0.6" y="0.8" width="5.6" height="8" fill="#d9d9d9" stroke="#c4c4c4" stroke-width="0.6"/><path d="M6.2 3.4L8.4 5.2L6.2 7z" fill="#c9c9c9"/></svg>
<div class="t" style="left:727.40px;top:150.50px;font-size:6.6px;line-height:6.6px;color:#c2c2c2;">A</div>
<div class="t" style="left:731.60px;top:151.60px;font-size:5.4px;line-height:5.4px;color:#c2c2c2;">o</div>
<svg style="left:658px;top:160px;" width="86" height="3" viewBox="0 0 86 3"><rect x="1.60" y="1.40" width="83.40" height="0.60" fill="#d8d8d8"/></svg>
<div style="left:659.60px;top:162.00px;width:83.40px;height:310.40px;background:#fff;"></div>
<svg style="left:661.50px;top:161.40px;" width="5" height="7" viewBox="0 0 5 7"><path d="M1.2 0.8L3.8 3.5L1.2 6.2" fill="none" stroke="#8a8a8a" stroke-width="0.7"/></svg>
<svg style="left:672.60px;top:161.50px;" width="6" height="6" viewBox="0 0 7 7"><path d="M0.4 1.6h2.2l0.7 0.8h3.3v4.2H0.4z" fill="#f0c75a"/><path d="M0.4 3.2h6.2v3.4H0.4z" fill="#f7dc8a"/></svg>
<div class="t" style="left:686.00px;top:161.10px;font-size:8.4px;line-height:8.4px;letter-spacing:-0.2px;">Dynamic</div>
<svg style="left:661.50px;top:173.05px;" width="5" height="7" viewBox="0 0 5 7"><path d="M1.2 0.8L3.8 3.5L1.2 6.2" fill="none" stroke="#8a8a8a" stroke-width="0.7"/></svg>
<svg style="left:672.60px;top:173.15px;" width="6" height="6" viewBox="0 0 7 7"><path d="M0.4 1.6h2.2l0.7 0.8h3.3v4.2H0.4z" fill="#f0c75a"/><path d="M0.4 3.2h6.2v3.4H0.4z" fill="#f7dc8a"/></svg>
<div class="t" style="left:686.00px;top:172.10px;font-size:8.4px;line-height:8.4px;letter-spacing:-0.2px;">Edges</div>
<svg style="left:661.50px;top:184.70px;" width="5" height="7" viewBox="0 0 5 7"><path d="M1.2 0.8L3.8 3.5L1.2 6.2" fill="none" stroke="#8a8a8a" stroke-width="0.7"/></svg>
<svg style="left:672.60px;top:184.80px;" width="6" height="6" viewBox="0 0 7 7"><path d="M0.4 1.6h2.2l0.7 0.8h3.3v4.2H0.4z" fill="#f0c75a"/><path d="M0.4 3.2h6.2v3.4H0.4z" fill="#f7dc8a"/></svg>
<div class="t" style="left:686.00px;top:184.10px;font-size:8.4px;line-height:8.4px;letter-spacing:-0.2px;">Operator</div>
<svg style="left:660.60px;top:197.45px;" width="7" height="5" viewBox="0 0 7 5"><path d="M0.8 1L3.5 3.7L6.2 1" fill="none" stroke="#8a8a8a" stroke-width="0.7"/></svg>
<svg style="left:672.60px;top:196.45px;" width="6" height="6" viewBox="0 0 7 7"><path d="M0.4 1.6h2.2l0.7 0.8h3.3v4.2H0.4z" fill="#f0c75a"/><path d="M0.4 3.2h6.2v3.4H0.4z" fill="#f7dc8a"/></svg>
<div class="t" style="left:686.00px;top:196.10px;font-size:8.4px;line-height:8.4px;letter-spacing:-0.2px;">Topology</div>
<div style="left:659.60px;top:205.90px;width:83.40px;height:11.40px;background:#d4d4d4;"></div>
<svg style="left:684.10px;top:208.40px;" width="5.2" height="5.9" viewBox="0 0 6.4 7.2"><path d="M0.6 0.6h5.2L4 2.8v3.4H2.4V2.8z" fill="#c9cbd8" stroke="#8e91a6" stroke-width="0.45"/><path d="M1.6 6.6h3.2" stroke="#8e91a6" stroke-width="0.5"/></svg>
<div class="t" style="left:696.90px;top:207.10px;font-size:8.4px;line-height:8.4px;letter-spacing:-0.2px;">Degree Range</div>
<svg style="left:684.10px;top:220.05px;" width="5.2" height="5.9" viewBox="0 0 6.4 7.2"><path d="M0.6 0.6h5.2L4 2.8v3.4H2.4V2.8z" fill="#c9cbd8" stroke="#8e91a6" stroke-width="0.45"/><path d="M1.6 6.6h3.2" stroke="#8e91a6" stroke-width="0.5"/></svg>
<div class="t" style="left:696.90px;top:219.10px;font-size:8.4px;line-height:8.4px;letter-spacing:-0.2px;">Ego Network</div>
<svg style="left:684.10px;top:231.70px;" width="5.2" height="5.9" viewBox="0 0 6.4 7.2"><path d="M0.6 0.6h5.2L4 2.8v3.4H2.4V2.8z" fill="#c9cbd8" stroke="#8e91a6" stroke-width="0.45"/><path d="M1.6 6.6h3.2" stroke="#8e91a6" stroke-width="0.5"/></svg>
<div class="t" style="left:696.90px;top:231.10px;font-size:8.4px;line-height:8.4px;letter-spacing:-0.2px;">Giant Component</div>
<svg style="left:684.10px;top:243.35px;" width="5.2" height="5.9" viewBox="0 0 6.4 7.2"><path d="M0.6 0.6h5.2L4 2.8v3.4H2.4V2.8z" fill="#c9cbd8" stroke="#8e91a6" stroke-width="0.45"/><path d="M1.6 6.6h3.2" stroke="#8e91a6" stroke-width="0.5"/></svg>
<div class="t" style="left:696.90px;top:242.10px;font-size:8.4px;line-height:8.4px;letter-spacing:-0.2px;">Has Self-loop</div>
<svg style="left:684.10px;top:255.00px;" width="5.2" height="5.9" viewBox="0 0 6.4 7.2"><path d="M0.6 0.6h5.2L4 2.8v3.4H2.4V2.8z" fill="#c9cbd8" stroke="#8e91a6" stroke-width="0.45"/><path d="M1.6 6.6h3.2" stroke="#8e91a6" stroke-width="0.5"/></svg>
<div class="t" style="left:696.90px;top:254.10px;font-size:8.4px;line-height:8.4px;letter-spacing:-0.2px;">In Degree Range</div>
<svg style="left:684.10px;top:266.65px;" width="5.2" height="5.9" viewBox="0 0 6.4 7.2"><path d="M0.6 0.6h5.2L4 2.8v3.4H2.4V2.8z" fill="#c9cbd8" stroke="#8e91a6" stroke-width="0.45"/><path d="M1.6 6.6h3.2" stroke="#8e91a6" stroke-width="0.5"/></svg>
<div class="t" style="left:696.90px;top:266.10px;font-size:8.4px;line-height:8.4px;letter-spacing:-0.2px;">K-core</div>
<svg style="left:684.10px;top:278.30px;" width="5.2" height="5.9" viewBox="0 0 6.4 7.2"><path d="M0.6 0.6h5.2L4 2.8v3.4H2.4V2.8z" fill="#c9cbd8" stroke="#8e91a6" stroke-width="0.45"/><path d="M1.6 6.6h3.2" stroke="#8e91a6" stroke-width="0.5"/></svg>
<div class="t" style="left:696.90px;top:277.10px;font-size:8.4px;line-height:8.4px;letter-spacing:-0.2px;">Mutual Degree Range</div>
<svg style="left:684.10px;top:289.95px;" width="5.2" height="5.9" viewBox="0 0 6.4 7.2"><path d="M0.6 0.6h5.2L4 2.8v3.4H2.4V2.8z" fill="#c9cbd8" stroke="#8e91a6" stroke-width="0.45"/><path d="M1.6 6.6h3.2" stroke="#8e91a6" stroke-width="0.5"/></svg>
<div class="t" style="left:696.90px;top:289.10px;font-size:8.4px;line-height:8.4px;letter-spacing:-0.2px;">Neighbors Network</div>
<svg style="left:684.10px;top:301.60px;" width="5.2" height="5.9" viewBox="0 0 6.4 7.2"><path d="M0.6 0.6h5.2L4 2.8v3.4H2.4V2.8z" fill="#c9cbd8" stroke="#8e91a6" stroke-width="0.45"/><path d="M1.6 6.6h3.2" stroke="#8e91a6" stroke-width="0.5"/></svg>
<div class="t" style="left:696.90px;top:301.10px;font-size:8.4px;line-height:8.4px;letter-spacing:-0.2px;">Out Degree Range</div>
<svg style="left:684.10px;top:313.25px;" width="5.2" height="5.9" viewBox="0 0 6.4 7.2"><path d="M0.6 0.6h5.2L4 2.8v3.4H2.4V2.8z" fill="#c9cbd8" stroke="#8e91a6" stroke-width="0.45"/><path d="M1.6 6.6h3.2" stroke="#8e91a6" stroke-width="0.5"/></svg>
<div class="t" style="left:696.90px;top:312.10px;font-size:8.4px;line-height:8.4px;letter-spacing:-0.2px;">Shortest Path</div>
<svg style="left:658px;top:161px;" width="86" height="3" viewBox="0 0 86 3"><rect x="1.60" y="1.00" width="83.40" height="0.90" fill="#fff"/></svg>
<svg style="left:658px;top:322px;" width="86" height="3" viewBox="0 0 86 3"><rect x="1.60" y="1.00" width="83.40" height="0.60" fill="#e2e2e2"/></svg>
<svg style="left:660.60px;top:325.60px;" width="8" height="9.6" viewBox="0 0 8 9.6"><path d="M0.6 0.6h6.6L5 3.6v4H2.8v-4z" fill="#c9cbd8" stroke="#8e91a6" stroke-width="0.5"/><path d="M1.8 8.8h4" stroke="#8e91a6" stroke-width="0.6"/></svg>
<div class="t" style="left:674.80px;top:326.10px;font-size:8.4px;line-height:8.4px;letter-spacing:-0.2px;">Queries</div>
<svg style="left:660.60px;top:339.30px;" width="7" height="5" viewBox="0 0 7 5"><path d="M0.8 1L3.5 3.7L6.2 1" fill="none" stroke="#8a8a8a" stroke-width="0.7"/></svg>
<svg style="left:673.00px;top:338.60px;" width="5.2" height="5.9" viewBox="0 0 6.4 7.2"><path d="M0.6 0.6h5.2L4 2.8v3.4H2.4V2.8z" fill="#c9cbd8" stroke="#8e91a6" stroke-width="0.45"/><path d="M1.6 6.6h3.2" stroke="#8e91a6" stroke-width="0.5"/></svg>
<div class="t" style="left:686.00px;top:338.10px;font-size:8.4px;line-height:8.4px;letter-spacing:-0.431px;">Degree Range</div>
<svg style="left:671.20px;top:351.00px;" width="7" height="5" viewBox="0 0 7 5"><path d="M0.8 1L3.5 3.7L6.2 1" fill="none" stroke="#8a8a8a" stroke-width="0.7"/></svg>
<div class="t" style="left:681.80px;top:350.50px;font-size:5.6px;line-height:5.6px;color:#777;">⚙</div>
<div class="t" style="left:696.90px;top:349.10px;font-size:8.4px;line-height:8.4px;letter-spacing:-0.413px;">Parameters</div>
<svg style="left:696px;top:363px;" width="4" height="5" viewBox="0 0 4 5"><rect x="1.20" y="1.40" width="1.80" height="1.80" fill="#3fc43f"/></svg>
<div class="t" style="left:707.80px;top:361.10px;font-size:8.4px;line-height:8.4px;letter-spacing:-0.2px;">range: 3 - 23</div>
<svg style="left:682.00px;top:371.00px;" width="11" height="11" viewBox="0 0 11 11"><circle cx="5" cy="5" r="4.2" fill="#f6b3b3" stroke="#e04545" stroke-width="0.9"/><circle cx="5" cy="5" r="2.2" fill="none" stroke="#e04545" stroke-width="0.8"/><circle cx="5" cy="5" r="0.7" fill="#e04545"/><circle cx="8" cy="8" r="1.9" fill="#18b83a"/></svg>
<div class="t" style="left:696.90px;top:372.10px;font-size:8.4px;line-height:8.4px;font-style:italic;letter-spacing:-0.2px;">Drag subfilter here</div>
<div style="left:664.00px;top:480.00px;width:96.00px;height:49.00px;border:0.6px solid #d9d9d9;border-radius:1.5px;"></div>
<div style="left:666.60px;top:476.00px;width:76.30px;height:9.00px;background:#f2f2f2;"></div>
<div class="t" style="left:667.70px;top:476.10px;font-size:8.4px;line-height:8.4px;letter-spacing:-0.2px;">Degree Range Settings</div>
<svg style="left:671px;top:490px;" width="73" height="5" viewBox="0 0 73 5"><rect x="1.00" y="1.90" width="71.00" height="1.60" fill="#1cc3e2"/></svg>
<svg style="left:670px;top:486px;" width="3" height="14" viewBox="0 0 3 14"><rect x="1.00" y="1.40" width="0.80" height="11.00" fill="#222"/></svg>
<svg style="left:664px;top:496px;" width="9" height="4" viewBox="0 0 9 4"><rect x="1.80" y="1.60" width="6.00" height="0.80" fill="#222"/></svg>
<div class="t" style="left:668.40px;top:500.10px;font-size:8.4px;line-height:8.4px;letter-spacing:-0.2px;">3</div>
<svg style="left:668.00px;top:524.00px;" width="76" height="5" viewBox="0 0 76 5"><path d="M0.4 3.3L8 2.6L24 2.1L26 1.5L76 1.1V3.5H0.4z" fill="#33383d"/></svg>
<div class="btn" style="left:702.70px;top:534.60px;width:57.30px;height:13.40px;"></div>
<div style="left:708.00px;top:537.40px;width:8.00px;height:8.00px;background:#c3d9ee;"></div>
<div class="t" style="left:719.80px;top:537.10px;font-size:8.4px;line-height:8.4px;letter-spacing:-0.2px;">Select</div>
<svg style="left:178.0px;top:97.1px;background:#000;" width="477.6" height="348.6" viewBox="178.0 97.1 477.6 348.6" fill="none"><path d="M225.0 155.4L319.6 176.7" stroke="#a77cc4" stroke-opacity="0.084" stroke-width="0.45"/><path d="M225.0 155.4L369.6 206.4" stroke="#a77cc4" stroke-opacity="0.079" stroke-width="0.45"/><path d="M225.0 155.4L385.8 158.6" stroke="#a77cc4" stroke-opacity="0.074" stroke-width="0.45"/><path d="M225.0 155.4L231.0 209.5" stroke="#a77cc4" stroke-opacity="0.069" stroke-width="0.45"/><path d="M225.0 155.4L265.5 187.6" stroke="#a77cc4" stroke-opacity="0.051" stroke-width="0.45"/><path d="M225.0 155.4L379.7 255.0" stroke="#a77cc4" stroke-opacity="0.061" stroke-width="0.45"/><path d="M225.0 155.4L189.0 336.0" stroke="#a77cc4" stroke-opacity="0.126" stroke-width="0.45"/><path d="M225.0 155.4L203.0 283.0" stroke="#a77cc4" stroke-opacity="0.066" stroke-width="0.45"/><path d="M284.0 140.8L369.6 206.4" stroke="#a77cc4" stroke-opacity="0.051" stroke-width="0.45"/><path d="M284.0 140.8L398.0 120.4" stroke="#a77cc4" stroke-opacity="0.084" stroke-width="0.45"/><path d="M284.0 140.8L302.4 258.9" stroke="#a77cc4" stroke-opacity="0.093" stroke-width="0.45"/><path d="M284.0 140.8L307.7 206.4" stroke="#a77cc4" stroke-opacity="0.079" stroke-width="0.45"/><path d="M284.0 140.8L226.4 355.8" stroke="#a77cc4" stroke-opacity="0.09" stroke-width="0.45"/><path d="M284.0 140.8L303.0 390.8" stroke="#a77cc4" stroke-opacity="0.12" stroke-width="0.45"/><path d="M284.0 140.8L325.0 422.0" stroke="#a77cc4" stroke-opacity="0.135" stroke-width="0.45"/><path d="M319.6 176.7L307.7 206.4" stroke="#a77cc4" stroke-opacity="0.135" stroke-width="0.45"/><path d="M319.6 176.7L203.0 283.0" stroke="#a77cc4" stroke-opacity="0.102" stroke-width="0.45"/><path d="M319.6 176.7L303.0 390.8" stroke="#a77cc4" stroke-opacity="0.112" stroke-width="0.45"/><path d="M319.6 176.7L325.0 422.0" stroke="#a77cc4" stroke-opacity="0.18" stroke-width="0.45"/><path d="M319.6 176.7L254.6 381.4" stroke="#a77cc4" stroke-opacity="0.12" stroke-width="0.45"/><path d="M319.6 176.7L406.0 262.0" stroke="#a77cc4" stroke-opacity="0.144" stroke-width="0.45"/><path d="M369.6 206.4L256.0 250.0" stroke="#a77cc4" stroke-opacity="0.204" stroke-width="0.45"/><path d="M369.6 206.4L302.4 258.9" stroke="#a77cc4" stroke-opacity="0.282" stroke-width="0.45"/><path d="M369.6 206.4L307.7 206.4" stroke="#a77cc4" stroke-opacity="0.126" stroke-width="0.45"/><path d="M369.6 206.4L425.0 236.2" stroke="#a77cc4" stroke-opacity="0.174" stroke-width="0.45"/><path d="M369.6 206.4L301.0 295.5" stroke="#a77cc4" stroke-opacity="0.285" stroke-width="0.45"/><path d="M369.6 206.4L257.0 302.6" stroke="#a77cc4" stroke-opacity="0.165" stroke-width="0.45"/><path d="M369.6 206.4L358.6 333.6" stroke="#a77cc4" stroke-opacity="0.24" stroke-width="0.45"/><path d="M369.6 206.4L490.5 292.3" stroke="#a77cc4" stroke-opacity="0.352" stroke-width="0.45"/><path d="M398.0 120.4L256.0 250.0" stroke="#a77cc4" stroke-opacity="0.093" stroke-width="0.45"/><path d="M398.0 120.4L302.4 258.9" stroke="#a77cc4" stroke-opacity="0.056" stroke-width="0.45"/><path d="M398.0 120.4L379.7 255.0" stroke="#a77cc4" stroke-opacity="0.061" stroke-width="0.45"/><path d="M398.0 120.4L425.0 236.2" stroke="#a77cc4" stroke-opacity="0.083" stroke-width="0.45"/><path d="M398.0 120.4L301.0 295.5" stroke="#a77cc4" stroke-opacity="0.056" stroke-width="0.45"/><path d="M398.0 120.4L358.6 333.6" stroke="#a77cc4" stroke-opacity="0.138" stroke-width="0.45"/><path d="M385.8 158.6L265.5 187.6" stroke="#a77cc4" stroke-opacity="0.065" stroke-width="0.45"/><path d="M385.8 158.6L302.4 258.9" stroke="#a77cc4" stroke-opacity="0.117" stroke-width="0.45"/><path d="M385.8 158.6L379.7 255.0" stroke="#a77cc4" stroke-opacity="0.056" stroke-width="0.45"/><path d="M385.8 158.6L301.0 295.5" stroke="#a77cc4" stroke-opacity="0.12" stroke-width="0.45"/><path d="M385.8 158.6L257.0 302.6" stroke="#a77cc4" stroke-opacity="0.12" stroke-width="0.45"/><path d="M231.0 209.5L265.5 187.6" stroke="#a77cc4" stroke-opacity="0.102" stroke-width="0.45"/><path d="M231.0 209.5L301.0 295.5" stroke="#a77cc4" stroke-opacity="0.135" stroke-width="0.45"/><path d="M231.0 209.5L358.6 333.6" stroke="#a77cc4" stroke-opacity="0.083" stroke-width="0.45"/><path d="M231.0 209.5L189.0 336.0" stroke="#a77cc4" stroke-opacity="0.112" stroke-width="0.45"/><path d="M265.5 187.6L256.0 250.0" stroke="#a77cc4" stroke-opacity="0.114" stroke-width="0.45"/><path d="M265.5 187.6L302.4 258.9" stroke="#a77cc4" stroke-opacity="0.168" stroke-width="0.45"/><path d="M265.5 187.6L358.6 333.6" stroke="#a77cc4" stroke-opacity="0.21" stroke-width="0.45"/><path d="M265.5 187.6L325.0 422.0" stroke="#a77cc4" stroke-opacity="0.18" stroke-width="0.45"/><path d="M256.0 250.0L302.4 258.9" stroke="#a77cc4" stroke-opacity="0.367" stroke-width="0.45"/><path d="M256.0 250.0L307.7 206.4" stroke="#a77cc4" stroke-opacity="0.156" stroke-width="0.45"/><path d="M256.0 250.0L425.0 236.2" stroke="#a77cc4" stroke-opacity="0.282" stroke-width="0.45"/><path d="M256.0 250.0L257.0 302.6" stroke="#a77cc4" stroke-opacity="0.338" stroke-width="0.45"/><path d="M256.0 250.0L303.0 390.8" stroke="#a77cc4" stroke-opacity="0.098" stroke-width="0.45"/><path d="M302.4 258.9L425.0 236.2" stroke="#a77cc4" stroke-opacity="0.174" stroke-width="0.45"/><path d="M302.4 258.9L301.0 295.5" stroke="#a77cc4" stroke-opacity="0.217" stroke-width="0.45"/><path d="M302.4 258.9L358.6 333.6" stroke="#a77cc4" stroke-opacity="0.255" stroke-width="0.45"/><path d="M302.4 258.9L189.0 336.0" stroke="#a77cc4" stroke-opacity="0.18" stroke-width="0.45"/><path d="M379.7 255.0L425.0 236.2" stroke="#a77cc4" stroke-opacity="0.255" stroke-width="0.45"/><path d="M379.7 255.0L301.0 295.5" stroke="#a77cc4" stroke-opacity="0.165" stroke-width="0.45"/><path d="M379.7 255.0L358.6 333.6" stroke="#a77cc4" stroke-opacity="0.262" stroke-width="0.45"/><path d="M379.7 255.0L490.5 292.3" stroke="#a77cc4" stroke-opacity="0.285" stroke-width="0.45"/><path d="M379.7 255.0L406.0 262.0" stroke="#a77cc4" stroke-opacity="0.33" stroke-width="0.45"/><path d="M425.0 236.2L325.0 422.0" stroke="#a77cc4" stroke-opacity="0.105" stroke-width="0.45"/><path d="M425.0 236.2L490.5 292.3" stroke="#a77cc4" stroke-opacity="0.217" stroke-width="0.45"/><path d="M425.0 236.2L517.4 358.0" stroke="#a77cc4" stroke-opacity="0.217" stroke-width="0.45"/><path d="M301.0 295.5L358.6 333.6" stroke="#a77cc4" stroke-opacity="0.315" stroke-width="0.45"/><path d="M301.0 295.5L226.4 355.8" stroke="#a77cc4" stroke-opacity="0.195" stroke-width="0.45"/><path d="M301.0 295.5L303.0 390.8" stroke="#a77cc4" stroke-opacity="0.217" stroke-width="0.45"/><path d="M301.0 295.5L406.0 262.0" stroke="#a77cc4" stroke-opacity="0.255" stroke-width="0.45"/><path d="M257.0 302.6L226.4 355.8" stroke="#a77cc4" stroke-opacity="0.128" stroke-width="0.45"/><path d="M257.0 302.6L303.0 390.8" stroke="#a77cc4" stroke-opacity="0.173" stroke-width="0.45"/><path d="M257.0 302.6L254.6 381.4" stroke="#a77cc4" stroke-opacity="0.128" stroke-width="0.45"/><path d="M257.0 302.6L406.0 262.0" stroke="#a77cc4" stroke-opacity="0.375" stroke-width="0.45"/><path d="M358.6 333.6L203.0 283.0" stroke="#a77cc4" stroke-opacity="0.112" stroke-width="0.45"/><path d="M358.6 333.6L303.0 390.8" stroke="#a77cc4" stroke-opacity="0.195" stroke-width="0.45"/><path d="M358.6 333.6L325.0 422.0" stroke="#a77cc4" stroke-opacity="0.105" stroke-width="0.45"/><path d="M358.6 333.6L406.0 262.0" stroke="#a77cc4" stroke-opacity="0.195" stroke-width="0.45"/><path d="M189.0 336.0L325.0 422.0" stroke="#a77cc4" stroke-opacity="0.09" stroke-width="0.45"/><path d="M226.4 355.8L325.0 422.0" stroke="#a77cc4" stroke-opacity="0.188" stroke-width="0.45"/><path d="M226.4 355.8L254.6 381.4" stroke="#a77cc4" stroke-opacity="0.188" stroke-width="0.45"/><path d="M203.0 283.0L254.6 381.4" stroke="#a77cc4" stroke-opacity="0.135" stroke-width="0.45"/><path d="M203.0 283.0L406.0 262.0" stroke="#a77cc4" stroke-opacity="0.09" stroke-width="0.45"/><path d="M303.0 390.8L325.0 422.0" stroke="#a77cc4" stroke-opacity="0.128" stroke-width="0.45"/><path d="M325.0 422.0L254.6 381.4" stroke="#a77cc4" stroke-opacity="0.128" stroke-width="0.45"/><path d="M325.0 422.0L490.5 292.3" stroke="#a77cc4" stroke-opacity="0.12" stroke-width="0.45"/><path d="M325.0 422.0L517.4 358.0" stroke="#a77cc4" stroke-opacity="0.173" stroke-width="0.45"/><path d="M490.5 292.3L517.4 358.0" stroke="#a77cc4" stroke-opacity="0.232" stroke-width="0.45"/><path d="M490.5 292.3L406.0 262.0" stroke="#a77cc4" stroke-opacity="0.27" stroke-width="0.45"/><path d="M350.9 283.7L490.5 292.3" stroke="#a77cc4" stroke-opacity="0.203" stroke-width="0.45"/><path d="M350.9 283.7L369.6 206.4" stroke="#a77cc4" stroke-opacity="0.18" stroke-width="0.45"/><path d="M675.9 395.8L265.5 187.6" stroke="#a77cc4" stroke-opacity="0.135" stroke-width="0.45"/><path d="M675.9 395.8L358.6 333.6" stroke="#a77cc4" stroke-opacity="0.255" stroke-width="0.45"/><path d="M675.9 395.8L490.5 292.3" stroke="#a77cc4" stroke-opacity="0.225" stroke-width="0.45"/><path d="M675.9 395.8L379.7 255.0" stroke="#a77cc4" stroke-opacity="0.277" stroke-width="0.45"/><path d="M359.5 194.6L302.4 258.9" stroke="#a77cc4" stroke-opacity="0.198" stroke-width="0.45"/><path d="M359.5 194.6L307.7 206.4" stroke="#a77cc4" stroke-opacity="0.126" stroke-width="0.45"/><path d="M359.5 194.6L385.8 158.6" stroke="#a77cc4" stroke-opacity="0.061" stroke-width="0.45"/><path d="M112.3 414.9L301.0 295.5" stroke="#a77cc4" stroke-opacity="0.27" stroke-width="0.45"/><path d="M112.3 414.9L369.6 206.4" stroke="#a77cc4" stroke-opacity="0.277" stroke-width="0.45"/><path d="M704.2 375.5L265.5 187.6" stroke="#a77cc4" stroke-opacity="0.15" stroke-width="0.45"/><path d="M704.2 375.5L302.4 258.9" stroke="#a77cc4" stroke-opacity="0.21" stroke-width="0.45"/><path d="M704.2 375.5L189.0 336.0" stroke="#a77cc4" stroke-opacity="0.135" stroke-width="0.45"/><path d="M704.2 375.5L231.0 209.5" stroke="#a77cc4" stroke-opacity="0.083" stroke-width="0.45"/><path d="M276.9 257.3L226.4 355.8" stroke="#a77cc4" stroke-opacity="0.143" stroke-width="0.45"/><path d="M276.9 257.3L203.0 283.0" stroke="#a77cc4" stroke-opacity="0.12" stroke-width="0.45"/><path d="M276.9 257.3L231.0 209.5" stroke="#a77cc4" stroke-opacity="0.108" stroke-width="0.45"/><path d="M176.6 249.7L256.0 250.0" stroke="#a77cc4" stroke-opacity="0.186" stroke-width="0.45"/><path d="M176.6 249.7L302.4 258.9" stroke="#a77cc4" stroke-opacity="0.128" stroke-width="0.45"/><path d="M176.6 249.7L490.5 292.3" stroke="#a77cc4" stroke-opacity="0.262" stroke-width="0.45"/><path d="M779.7 306.4L319.6 176.7" stroke="#a77cc4" stroke-opacity="0.188" stroke-width="0.45"/><path d="M779.7 306.4L231.0 209.5" stroke="#a77cc4" stroke-opacity="0.068" stroke-width="0.45"/><path d="M779.7 306.4L303.0 390.8" stroke="#a77cc4" stroke-opacity="0.105" stroke-width="0.45"/><path d="M289.1 199.7L231.0 209.5" stroke="#a77cc4" stroke-opacity="0.098" stroke-width="0.45"/><path d="M289.1 199.7L256.0 250.0" stroke="#a77cc4" stroke-opacity="0.138" stroke-width="0.45"/><path d="M289.1 199.7L379.7 255.0" stroke="#a77cc4" stroke-opacity="0.144" stroke-width="0.45"/><path d="M289.1 199.7L257.0 302.6" stroke="#a77cc4" stroke-opacity="0.285" stroke-width="0.45"/><path d="M289.1 199.7L517.4 358.0" stroke="#a77cc4" stroke-opacity="0.12" stroke-width="0.45"/><path d="M60.8 213.7L325.0 422.0" stroke="#a77cc4" stroke-opacity="0.068" stroke-width="0.45"/><path d="M60.8 213.7L254.6 381.4" stroke="#a77cc4" stroke-opacity="0.12" stroke-width="0.45"/><path d="M60.8 213.7L257.0 302.6" stroke="#a77cc4" stroke-opacity="0.255" stroke-width="0.45"/><path d="M60.8 213.7L425.0 236.2" stroke="#a77cc4" stroke-opacity="0.162" stroke-width="0.45"/><path d="M411.2 281.5L257.0 302.6" stroke="#a77cc4" stroke-opacity="0.217" stroke-width="0.45"/><path d="M411.2 281.5L369.6 206.4" stroke="#a77cc4" stroke-opacity="0.204" stroke-width="0.45"/><path d="M411.2 281.5L307.7 206.4" stroke="#a77cc4" stroke-opacity="0.21" stroke-width="0.45"/><path d="M208.7 282.7L257.0 302.6" stroke="#a77cc4" stroke-opacity="0.262" stroke-width="0.45"/><path d="M208.7 282.7L517.4 358.0" stroke="#a77cc4" stroke-opacity="0.15" stroke-width="0.45"/><path d="M208.7 282.7L226.4 355.8" stroke="#a77cc4" stroke-opacity="0.09" stroke-width="0.45"/><path d="M126.4 223.7L225.0 155.4" stroke="#a77cc4" stroke-opacity="0.046" stroke-width="0.45"/><path d="M126.4 223.7L257.0 302.6" stroke="#a77cc4" stroke-opacity="0.27" stroke-width="0.45"/><path d="M126.4 223.7L425.0 236.2" stroke="#a77cc4" stroke-opacity="0.144" stroke-width="0.45"/><path d="M493.3 296.3L369.6 206.4" stroke="#a77cc4" stroke-opacity="0.307" stroke-width="0.45"/><path d="M493.3 296.3L265.5 187.6" stroke="#a77cc4" stroke-opacity="0.084" stroke-width="0.45"/><path d="M493.3 296.3L301.0 295.5" stroke="#a77cc4" stroke-opacity="0.195" stroke-width="0.45"/><path d="M493.3 296.3L257.0 302.6" stroke="#a77cc4" stroke-opacity="0.165" stroke-width="0.45"/><path d="M493.3 296.3L226.4 355.8" stroke="#a77cc4" stroke-opacity="0.173" stroke-width="0.45"/><path d="M615.4 368.2L254.6 381.4" stroke="#a77cc4" stroke-opacity="0.112" stroke-width="0.45"/><path d="M615.4 368.2L369.6 206.4" stroke="#a77cc4" stroke-opacity="0.262" stroke-width="0.45"/><path d="M615.4 368.2L301.0 295.5" stroke="#a77cc4" stroke-opacity="0.18" stroke-width="0.45"/><path d="M301.3 551.4L406.0 262.0" stroke="#a77cc4" stroke-opacity="0.188" stroke-width="0.45"/><path d="M301.3 551.4L203.0 283.0" stroke="#a77cc4" stroke-opacity="0.075" stroke-width="0.45"/><path d="M170.6 405.5L256.0 250.0" stroke="#a77cc4" stroke-opacity="0.188" stroke-width="0.45"/><path d="M170.6 405.5L490.5 292.3" stroke="#a77cc4" stroke-opacity="0.15" stroke-width="0.45"/><path d="M170.6 405.5L307.7 206.4" stroke="#a77cc4" stroke-opacity="0.12" stroke-width="0.45"/><path d="M170.6 405.5L226.4 355.8" stroke="#a77cc4" stroke-opacity="0.098" stroke-width="0.45"/><path d="M536.0 24.5L358.6 333.6" stroke="#a77cc4" stroke-opacity="0.27" stroke-width="0.45"/><path d="M536.0 24.5L369.6 206.4" stroke="#a77cc4" stroke-opacity="0.195" stroke-width="0.45"/><path d="M536.0 24.5L385.8 158.6" stroke="#a77cc4" stroke-opacity="0.15" stroke-width="0.45"/><path d="M720.0 351.3L225.0 155.4" stroke="#a77cc4" stroke-opacity="0.098" stroke-width="0.45"/><path d="M720.0 351.3L369.6 206.4" stroke="#a77cc4" stroke-opacity="0.195" stroke-width="0.45"/><path d="M720.0 351.3L256.0 250.0" stroke="#a77cc4" stroke-opacity="0.3" stroke-width="0.45"/><path d="M447.6 282.4L490.5 292.3" stroke="#a77cc4" stroke-opacity="0.24" stroke-width="0.45"/><path d="M447.6 282.4L319.6 176.7" stroke="#a77cc4" stroke-opacity="0.096" stroke-width="0.45"/><path d="M447.6 282.4L425.0 236.2" stroke="#a77cc4" stroke-opacity="0.24" stroke-width="0.45"/><path d="M677.9 450.6L256.0 250.0" stroke="#a77cc4" stroke-opacity="0.173" stroke-width="0.45"/><path d="M677.9 450.6L189.0 336.0" stroke="#a77cc4" stroke-opacity="0.135" stroke-width="0.45"/><path d="M492.2 500.0L325.0 422.0" stroke="#a77cc4" stroke-opacity="0.143" stroke-width="0.45"/><path d="M492.2 500.0L379.7 255.0" stroke="#a77cc4" stroke-opacity="0.18" stroke-width="0.45"/><path d="M492.2 500.0L425.0 236.2" stroke="#a77cc4" stroke-opacity="0.173" stroke-width="0.45"/><path d="M492.2 500.0L303.0 390.8" stroke="#a77cc4" stroke-opacity="0.075" stroke-width="0.45"/><path d="M678.5 312.8L256.0 250.0" stroke="#a77cc4" stroke-opacity="0.21" stroke-width="0.45"/><path d="M678.5 312.8L257.0 302.6" stroke="#a77cc4" stroke-opacity="0.307" stroke-width="0.45"/><path d="M678.5 312.8L189.0 336.0" stroke="#a77cc4" stroke-opacity="0.15" stroke-width="0.45"/><path d="M678.5 312.8L203.0 283.0" stroke="#a77cc4" stroke-opacity="0.098" stroke-width="0.45"/><path d="M678.5 312.8L303.0 390.8" stroke="#a77cc4" stroke-opacity="0.105" stroke-width="0.45"/><path d="M524.5 350.7L265.5 187.6" stroke="#a77cc4" stroke-opacity="0.21" stroke-width="0.45"/><path d="M524.5 350.7L225.0 155.4" stroke="#a77cc4" stroke-opacity="0.083" stroke-width="0.45"/><path d="M524.5 350.7L301.0 295.5" stroke="#a77cc4" stroke-opacity="0.255" stroke-width="0.45"/><path d="M524.5 350.7L256.0 250.0" stroke="#a77cc4" stroke-opacity="0.15" stroke-width="0.45"/><path d="M563.7 274.0L307.7 206.4" stroke="#a77cc4" stroke-opacity="0.27" stroke-width="0.45"/><path d="M563.7 274.0L425.0 236.2" stroke="#a77cc4" stroke-opacity="0.135" stroke-width="0.45"/><path d="M613.7 281.7L301.0 295.5" stroke="#a77cc4" stroke-opacity="0.247" stroke-width="0.45"/><path d="M613.7 281.7L307.7 206.4" stroke="#a77cc4" stroke-opacity="0.217" stroke-width="0.45"/><path d="M613.7 281.7L369.6 206.4" stroke="#a77cc4" stroke-opacity="0.225" stroke-width="0.45"/><path d="M456.0 369.2L325.0 422.0" stroke="#a77cc4" stroke-opacity="0.098" stroke-width="0.45"/><path d="M456.0 369.2L398.0 120.4" stroke="#a77cc4" stroke-opacity="0.068" stroke-width="0.45"/><path d="M456.0 369.2L406.0 262.0" stroke="#a77cc4" stroke-opacity="0.143" stroke-width="0.45"/><path d="M108.9 412.6L325.0 422.0" stroke="#a77cc4" stroke-opacity="0.112" stroke-width="0.45"/><path d="M108.9 412.6L301.0 295.5" stroke="#a77cc4" stroke-opacity="0.292" stroke-width="0.45"/><path d="M108.9 412.6L406.0 262.0" stroke="#a77cc4" stroke-opacity="0.165" stroke-width="0.45"/><path d="M256.5 408.4L379.7 255.0" stroke="#a77cc4" stroke-opacity="0.232" stroke-width="0.45"/><path d="M256.5 408.4L284.0 140.8" stroke="#a77cc4" stroke-opacity="0.09" stroke-width="0.45"/><path d="M256.5 408.4L302.4 258.9" stroke="#a77cc4" stroke-opacity="0.262" stroke-width="0.45"/><path d="M256.5 408.4L226.4 355.8" stroke="#a77cc4" stroke-opacity="0.09" stroke-width="0.45"/><path d="M211.9 414.3L301.0 295.5" stroke="#a77cc4" stroke-opacity="0.3" stroke-width="0.45"/><path d="M211.9 414.3L257.0 302.6" stroke="#a77cc4" stroke-opacity="0.158" stroke-width="0.45"/><path d="M211.9 414.3L379.7 255.0" stroke="#a77cc4" stroke-opacity="0.135" stroke-width="0.45"/><path d="M782.0 276.6L265.5 187.6" stroke="#a77cc4" stroke-opacity="0.195" stroke-width="0.45"/><path d="M782.0 276.6L257.0 302.6" stroke="#a77cc4" stroke-opacity="0.247" stroke-width="0.45"/><path d="M782.0 276.6L406.0 262.0" stroke="#a77cc4" stroke-opacity="0.315" stroke-width="0.45"/><path d="M343.1 268.2L256.0 250.0" stroke="#a77cc4" stroke-opacity="0.165" stroke-width="0.45"/><path d="M343.1 268.2L398.0 120.4" stroke="#a77cc4" stroke-opacity="0.065" stroke-width="0.45"/><path d="M565.9 429.5L256.0 250.0" stroke="#a77cc4" stroke-opacity="0.158" stroke-width="0.45"/><path d="M565.9 429.5L302.4 258.9" stroke="#a77cc4" stroke-opacity="0.307" stroke-width="0.45"/><path d="M565.9 429.5L379.7 255.0" stroke="#a77cc4" stroke-opacity="0.232" stroke-width="0.45"/><path d="M247.9 416.2L307.7 206.4" stroke="#a77cc4" stroke-opacity="0.21" stroke-width="0.45"/><path d="M247.9 416.2L398.0 120.4" stroke="#a77cc4" stroke-opacity="0.083" stroke-width="0.45"/><path d="M285.3 317.9L302.4 258.9" stroke="#a77cc4" stroke-opacity="0.15" stroke-width="0.45"/><path d="M285.3 317.9L307.7 206.4" stroke="#a77cc4" stroke-opacity="0.158" stroke-width="0.45"/><path d="M285.3 317.9L257.0 302.6" stroke="#a77cc4" stroke-opacity="0.173" stroke-width="0.45"/><path d="M285.3 317.9L358.6 333.6" stroke="#a77cc4" stroke-opacity="0.24" stroke-width="0.45"/><path d="M285.3 317.9L203.0 283.0" stroke="#a77cc4" stroke-opacity="0.12" stroke-width="0.45"/><path d="M285.3 317.9L303.0 390.8" stroke="#a77cc4" stroke-opacity="0.098" stroke-width="0.45"/><path d="M258.9 376.3L225.0 155.4" stroke="#a77cc4" stroke-opacity="0.09" stroke-width="0.45"/><path d="M258.9 376.3L369.6 206.4" stroke="#a77cc4" stroke-opacity="0.24" stroke-width="0.45"/><path d="M572.2 378.4L257.0 302.6" stroke="#a77cc4" stroke-opacity="0.225" stroke-width="0.45"/><path d="M572.2 378.4L517.4 358.0" stroke="#a77cc4" stroke-opacity="0.09" stroke-width="0.45"/><path d="M275.2 289.3L517.4 358.0" stroke="#a77cc4" stroke-opacity="0.105" stroke-width="0.45"/><path d="M275.2 289.3L226.4 355.8" stroke="#a77cc4" stroke-opacity="0.12" stroke-width="0.45"/><path d="M403.9 261.1L369.6 206.4" stroke="#a77cc4" stroke-opacity="0.144" stroke-width="0.45"/><path d="M403.9 261.1L379.7 255.0" stroke="#a77cc4" stroke-opacity="0.232" stroke-width="0.45"/><path d="M403.9 261.1L425.0 236.2" stroke="#a77cc4" stroke-opacity="0.188" stroke-width="0.45"/><path d="M403.9 261.1L301.0 295.5" stroke="#a77cc4" stroke-opacity="0.203" stroke-width="0.45"/><path d="M403.9 261.1L203.0 283.0" stroke="#a77cc4" stroke-opacity="0.143" stroke-width="0.45"/><path d="M403.9 261.1L254.6 381.4" stroke="#a77cc4" stroke-opacity="0.173" stroke-width="0.45"/><path d="M752.8 9.8L307.7 206.4" stroke="#a77cc4" stroke-opacity="0.3" stroke-width="0.45"/><path d="M752.8 9.8L369.6 206.4" stroke="#a77cc4" stroke-opacity="0.203" stroke-width="0.45"/><path d="M752.8 9.8L303.0 390.8" stroke="#a77cc4" stroke-opacity="0.09" stroke-width="0.45"/><path d="M399.6 459.1L225.0 155.4" stroke="#a77cc4" stroke-opacity="0.135" stroke-width="0.45"/><path d="M399.6 459.1L369.6 206.4" stroke="#a77cc4" stroke-opacity="0.21" stroke-width="0.45"/><path d="M776.4 251.7L301.0 295.5" stroke="#a77cc4" stroke-opacity="0.277" stroke-width="0.45"/><path d="M776.4 251.7L256.0 250.0" stroke="#a77cc4" stroke-opacity="0.195" stroke-width="0.45"/><path d="M759.7 118.0L265.5 187.6" stroke="#a77cc4" stroke-opacity="0.158" stroke-width="0.45"/><path d="M759.7 118.0L379.7 255.0" stroke="#a77cc4" stroke-opacity="0.3" stroke-width="0.45"/><path d="M759.7 118.0L307.7 206.4" stroke="#a77cc4" stroke-opacity="0.143" stroke-width="0.45"/><path d="M759.7 118.0L301.0 295.5" stroke="#a77cc4" stroke-opacity="0.217" stroke-width="0.45"/><path d="M759.7 118.0L303.0 390.8" stroke="#a77cc4" stroke-opacity="0.165" stroke-width="0.45"/><path d="M765.0 74.3L225.0 155.4" stroke="#a77cc4" stroke-opacity="0.135" stroke-width="0.45"/><path d="M765.0 74.3L379.7 255.0" stroke="#a77cc4" stroke-opacity="0.18" stroke-width="0.45"/><path d="M765.0 74.3L256.0 250.0" stroke="#a77cc4" stroke-opacity="0.24" stroke-width="0.45"/><path d="M667.0 284.9L225.0 155.4" stroke="#a77cc4" stroke-opacity="0.075" stroke-width="0.45"/><path d="M667.0 284.9L385.8 158.6" stroke="#a77cc4" stroke-opacity="0.112" stroke-width="0.45"/><path d="M667.0 284.9L307.7 206.4" stroke="#a77cc4" stroke-opacity="0.285" stroke-width="0.45"/><path d="M667.0 284.9L301.0 295.5" stroke="#a77cc4" stroke-opacity="0.285" stroke-width="0.45"/><path d="M667.0 284.9L303.0 390.8" stroke="#a77cc4" stroke-opacity="0.09" stroke-width="0.45"/><path d="M667.0 284.9L517.4 358.0" stroke="#a77cc4" stroke-opacity="0.112" stroke-width="0.45"/><path d="M724.3 272.2L301.0 295.5" stroke="#a77cc4" stroke-opacity="0.307" stroke-width="0.45"/><path d="M724.3 272.2L307.7 206.4" stroke="#a77cc4" stroke-opacity="0.277" stroke-width="0.45"/><path d="M724.3 272.2L203.0 283.0" stroke="#a77cc4" stroke-opacity="0.083" stroke-width="0.45"/><path d="M423.9 252.4L284.0 140.8" stroke="#a77cc4" stroke-opacity="0.061" stroke-width="0.45"/><path d="M423.9 252.4L425.0 236.2" stroke="#a77cc4" stroke-opacity="0.285" stroke-width="0.45"/><path d="M423.9 252.4L307.7 206.4" stroke="#a77cc4" stroke-opacity="0.216" stroke-width="0.45"/><path d="M423.9 252.4L226.4 355.8" stroke="#a77cc4" stroke-opacity="0.135" stroke-width="0.45"/><path d="M314.5 177.0L358.6 333.6" stroke="#a77cc4" stroke-opacity="0.21" stroke-width="0.45"/><path d="M314.5 177.0L369.6 206.4" stroke="#a77cc4" stroke-opacity="0.126" stroke-width="0.45"/><path d="M314.5 177.0L226.4 355.8" stroke="#a77cc4" stroke-opacity="0.068" stroke-width="0.45"/><path d="M681.8 1.0L325.0 422.0" stroke="#a77cc4" stroke-opacity="0.158" stroke-width="0.45"/><path d="M681.8 1.0L225.0 155.4" stroke="#a77cc4" stroke-opacity="0.128" stroke-width="0.45"/><path d="M681.8 1.0L319.6 176.7" stroke="#a77cc4" stroke-opacity="0.135" stroke-width="0.45"/><path d="M681.8 1.0L303.0 390.8" stroke="#a77cc4" stroke-opacity="0.083" stroke-width="0.45"/><path d="M745.5 399.3L302.4 258.9" stroke="#a77cc4" stroke-opacity="0.217" stroke-width="0.45"/><path d="M745.5 399.3L319.6 176.7" stroke="#a77cc4" stroke-opacity="0.09" stroke-width="0.45"/><path d="M745.5 399.3L369.6 206.4" stroke="#a77cc4" stroke-opacity="0.247" stroke-width="0.45"/><path d="M274.5 208.4L189.0 336.0" stroke="#a77cc4" stroke-opacity="0.128" stroke-width="0.45"/><path d="M274.5 208.4L425.0 236.2" stroke="#a77cc4" stroke-opacity="0.108" stroke-width="0.45"/><path d="M350.7 559.3L385.8 158.6" stroke="#a77cc4" stroke-opacity="0.135" stroke-width="0.45"/><path d="M350.7 559.3L256.0 250.0" stroke="#a77cc4" stroke-opacity="0.255" stroke-width="0.45"/><path d="M350.7 559.3L302.4 258.9" stroke="#a77cc4" stroke-opacity="0.143" stroke-width="0.45"/><path d="M350.7 559.3L303.0 390.8" stroke="#a77cc4" stroke-opacity="0.09" stroke-width="0.45"/><path d="M350.7 559.3L517.4 358.0" stroke="#a77cc4" stroke-opacity="0.203" stroke-width="0.45"/><path d="M496.0 202.0L325.0 422.0" stroke="#a77cc4" stroke-opacity="0.15" stroke-width="0.45"/><path d="M496.0 202.0L301.0 295.5" stroke="#a77cc4" stroke-opacity="0.24" stroke-width="0.45"/><path d="M496.0 202.0L189.0 336.0" stroke="#a77cc4" stroke-opacity="0.068" stroke-width="0.45"/><path d="M376.8 154.1L257.0 302.6" stroke="#a77cc4" stroke-opacity="0.192" stroke-width="0.45"/><path d="M376.8 154.1L358.6 333.6" stroke="#a77cc4" stroke-opacity="0.24" stroke-width="0.45"/><path d="M376.8 154.1L425.0 236.2" stroke="#a77cc4" stroke-opacity="0.21" stroke-width="0.45"/><path d="M677.7 159.9L265.5 187.6" stroke="#a77cc4" stroke-opacity="0.12" stroke-width="0.45"/><path d="M677.7 159.9L257.0 302.6" stroke="#a77cc4" stroke-opacity="0.217" stroke-width="0.45"/><path d="M677.7 159.9L189.0 336.0" stroke="#a77cc4" stroke-opacity="0.09" stroke-width="0.45"/><path d="M752.3 139.6L257.0 302.6" stroke="#a77cc4" stroke-opacity="0.247" stroke-width="0.45"/><path d="M752.3 139.6L369.6 206.4" stroke="#a77cc4" stroke-opacity="0.173" stroke-width="0.45"/><path d="M256.6 286.1L301.0 295.5" stroke="#a77cc4" stroke-opacity="0.143" stroke-width="0.45"/><path d="M256.6 286.1L517.4 358.0" stroke="#a77cc4" stroke-opacity="0.158" stroke-width="0.45"/><path d="M256.6 286.1L385.8 158.6" stroke="#a77cc4" stroke-opacity="0.108" stroke-width="0.45"/><path d="M200.5 209.1L325.0 422.0" stroke="#a77cc4" stroke-opacity="0.143" stroke-width="0.45"/><path d="M200.5 209.1L319.6 176.7" stroke="#a77cc4" stroke-opacity="0.13" stroke-width="0.45"/><path d="M200.5 209.1L231.0 209.5" stroke="#a77cc4" stroke-opacity="0.051" stroke-width="0.45"/><path d="M767.6 495.2L379.7 255.0" stroke="#a77cc4" stroke-opacity="0.232" stroke-width="0.45"/><path d="M767.6 495.2L307.7 206.4" stroke="#a77cc4" stroke-opacity="0.188" stroke-width="0.45"/><path d="M767.6 495.2L303.0 390.8" stroke="#a77cc4" stroke-opacity="0.165" stroke-width="0.45"/><path d="M767.6 495.2L517.4 358.0" stroke="#a77cc4" stroke-opacity="0.143" stroke-width="0.45"/><path d="M767.6 495.2L406.0 262.0" stroke="#a77cc4" stroke-opacity="0.158" stroke-width="0.45"/><path d="M526.9 511.5L398.0 120.4" stroke="#a77cc4" stroke-opacity="0.15" stroke-width="0.45"/><path d="M526.9 511.5L265.5 187.6" stroke="#a77cc4" stroke-opacity="0.21" stroke-width="0.45"/><path d="M526.9 511.5L379.7 255.0" stroke="#a77cc4" stroke-opacity="0.262" stroke-width="0.45"/><path d="M526.9 511.5L425.0 236.2" stroke="#a77cc4" stroke-opacity="0.262" stroke-width="0.45"/><path d="M526.9 511.5L325.0 422.0" stroke="#a77cc4" stroke-opacity="0.09" stroke-width="0.45"/><path d="M756.1 307.6L265.5 187.6" stroke="#a77cc4" stroke-opacity="0.203" stroke-width="0.45"/><path d="M756.1 307.6L369.6 206.4" stroke="#a77cc4" stroke-opacity="0.143" stroke-width="0.45"/><path d="M756.1 307.6L303.0 390.8" stroke="#a77cc4" stroke-opacity="0.098" stroke-width="0.45"/><path d="M592.5 27.7L379.7 255.0" stroke="#a77cc4" stroke-opacity="0.203" stroke-width="0.45"/><path d="M592.5 27.7L256.0 250.0" stroke="#a77cc4" stroke-opacity="0.18" stroke-width="0.45"/><path d="M592.5 27.7L358.6 333.6" stroke="#a77cc4" stroke-opacity="0.143" stroke-width="0.45"/><path d="M592.5 27.7L231.0 209.5" stroke="#a77cc4" stroke-opacity="0.098" stroke-width="0.45"/><path d="M393.6 421.5L301.0 295.5" stroke="#a77cc4" stroke-opacity="0.21" stroke-width="0.45"/><path d="M393.6 421.5L517.4 358.0" stroke="#a77cc4" stroke-opacity="0.09" stroke-width="0.45"/><path d="M393.6 421.5L256.0 250.0" stroke="#a77cc4" stroke-opacity="0.15" stroke-width="0.45"/><path d="M393.6 421.5L254.6 381.4" stroke="#a77cc4" stroke-opacity="0.135" stroke-width="0.45"/><path d="M536.9 160.3L256.0 250.0" stroke="#a77cc4" stroke-opacity="0.153" stroke-width="0.45"/><path d="M536.9 160.3L379.7 255.0" stroke="#a77cc4" stroke-opacity="0.232" stroke-width="0.45"/><path d="M536.9 160.3L369.6 206.4" stroke="#a77cc4" stroke-opacity="0.188" stroke-width="0.45"/><path d="M154.2 264.4L231.0 209.5" stroke="#a77cc4" stroke-opacity="0.054" stroke-width="0.45"/><path d="M154.2 264.4L265.5 187.6" stroke="#a77cc4" stroke-opacity="0.072" stroke-width="0.45"/><path d="M154.2 264.4L256.0 250.0" stroke="#a77cc4" stroke-opacity="0.158" stroke-width="0.45"/><path d="M154.2 264.4L301.0 295.5" stroke="#a77cc4" stroke-opacity="0.15" stroke-width="0.45"/><path d="M154.2 264.4L358.6 333.6" stroke="#a77cc4" stroke-opacity="0.3" stroke-width="0.45"/><path d="M545.4 168.5L256.0 250.0" stroke="#a77cc4" stroke-opacity="0.3" stroke-width="0.45"/><path d="M545.4 168.5L231.0 209.5" stroke="#a77cc4" stroke-opacity="0.046" stroke-width="0.45"/><path d="M472.4 220.8L303.0 390.8" stroke="#a77cc4" stroke-opacity="0.12" stroke-width="0.45"/><path d="M472.4 220.8L231.0 209.5" stroke="#a77cc4" stroke-opacity="0.096" stroke-width="0.45"/><path d="M427.8 123.2L385.8 158.6" stroke="#a77cc4" stroke-opacity="0.143" stroke-width="0.45"/><path d="M427.8 123.2L256.0 250.0" stroke="#a77cc4" stroke-opacity="0.074" stroke-width="0.45"/><path d="M427.8 123.2L379.7 255.0" stroke="#a77cc4" stroke-opacity="0.285" stroke-width="0.45"/><path d="M427.8 123.2L425.0 236.2" stroke="#a77cc4" stroke-opacity="0.262" stroke-width="0.45"/><path d="M427.8 123.2L517.4 358.0" stroke="#a77cc4" stroke-opacity="0.15" stroke-width="0.45"/><path d="M127.1 191.5L302.4 258.9" stroke="#a77cc4" stroke-opacity="0.234" stroke-width="0.45"/><path d="M127.1 191.5L379.7 255.0" stroke="#a77cc4" stroke-opacity="0.24" stroke-width="0.45"/><path d="M127.1 191.5L301.0 295.5" stroke="#a77cc4" stroke-opacity="0.246" stroke-width="0.45"/><path d="M127.1 191.5L226.4 355.8" stroke="#a77cc4" stroke-opacity="0.098" stroke-width="0.45"/><path d="M127.1 191.5L303.0 390.8" stroke="#a77cc4" stroke-opacity="0.075" stroke-width="0.45"/><path d="M127.1 191.5L406.0 262.0" stroke="#a77cc4" stroke-opacity="0.198" stroke-width="0.45"/><path d="M251.2 319.0L319.6 176.7" stroke="#a77cc4" stroke-opacity="0.09" stroke-width="0.45"/><path d="M251.2 319.0L231.0 209.5" stroke="#a77cc4" stroke-opacity="0.143" stroke-width="0.45"/><path d="M251.2 319.0L379.7 255.0" stroke="#a77cc4" stroke-opacity="0.12" stroke-width="0.45"/><path d="M251.2 319.0L303.0 390.8" stroke="#a77cc4" stroke-opacity="0.105" stroke-width="0.45"/><path d="M251.2 319.0L325.0 422.0" stroke="#a77cc4" stroke-opacity="0.09" stroke-width="0.45"/><path d="M251.2 319.0L517.4 358.0" stroke="#a77cc4" stroke-opacity="0.188" stroke-width="0.45"/><path d="M677.9 450.6L776.4 251.7" stroke="#a77cc4" stroke-opacity="0.21" stroke-width="0.45"/><path d="M759.7 118.0L782.0 276.6" stroke="#8a6a5a" stroke-opacity="0.238" stroke-width="0.45"/><path d="M127.1 191.5L756.1 307.6" stroke="#8a6a5a" stroke-opacity="0.23" stroke-width="0.45"/><path d="M350.9 283.7L112.3 414.9" stroke="#8a6a5a" stroke-opacity="0.246" stroke-width="0.45"/><path d="M211.9 414.3L752.8 9.8" stroke="#a77cc4" stroke-opacity="0.143" stroke-width="0.45"/><path d="M60.8 213.7L492.2 500.0" stroke="#a77cc4" stroke-opacity="0.098" stroke-width="0.45"/><path d="M615.4 368.2L493.3 296.3" stroke="#6a8a4a" stroke-opacity="0.246" stroke-width="0.45"/><path d="M667.0 284.9L720.0 351.3" stroke="#a77cc4" stroke-opacity="0.098" stroke-width="0.45"/><path d="M536.0 24.5L276.9 257.3" stroke="#a77cc4" stroke-opacity="0.188" stroke-width="0.45"/><path d="M289.1 199.7L423.9 252.4" stroke="#a77cc4" stroke-opacity="0.162" stroke-width="0.45"/><path d="M127.1 191.5L289.1 199.7" stroke="#8a6a5a" stroke-opacity="0.119" stroke-width="0.45"/><path d="M456.0 369.2L456.0 369.2" stroke="#a77cc4" stroke-opacity="0.098" stroke-width="0.45"/><path d="M208.7 282.7L572.2 378.4" stroke="#8a6a5a" stroke-opacity="0.119" stroke-width="0.45"/><path d="M126.4 223.7L456.0 369.2" stroke="#a77cc4" stroke-opacity="0.135" stroke-width="0.45"/><path d="M677.7 159.9L247.9 416.2" stroke="#a77cc4" stroke-opacity="0.135" stroke-width="0.45"/><path d="M572.2 378.4L176.6 249.7" stroke="#a77cc4" stroke-opacity="0.21" stroke-width="0.45"/><path d="M154.2 264.4L756.1 307.6" stroke="#a77cc4" stroke-opacity="0.173" stroke-width="0.45"/><path d="M112.3 414.9L496.0 202.0" stroke="#a77cc4" stroke-opacity="0.15" stroke-width="0.45"/><path d="M126.4 223.7L667.0 284.9" stroke="#8a6a5a" stroke-opacity="0.212" stroke-width="0.45"/><path d="M127.1 191.5L108.9 412.6" stroke="#a77cc4" stroke-opacity="0.165" stroke-width="0.45"/><path d="M572.2 378.4L492.2 500.0" stroke="#8a6a5a" stroke-opacity="0.102" stroke-width="0.45"/><path d="M613.7 281.7L572.2 378.4" stroke="#a77cc4" stroke-opacity="0.09" stroke-width="0.45"/><path d="M393.6 421.5L126.4 223.7" stroke="#8a6a5a" stroke-opacity="0.212" stroke-width="0.45"/><path d="M524.5 350.7L536.9 160.3" stroke="#6a8a4a" stroke-opacity="0.153" stroke-width="0.45"/><path d="M545.4 168.5L247.9 416.2" stroke="#6a8a4a" stroke-opacity="0.246" stroke-width="0.45"/><path d="M572.2 378.4L108.9 412.6" stroke="#a77cc4" stroke-opacity="0.158" stroke-width="0.45"/><path d="M615.4 368.2L411.2 281.5" stroke="#8a6a5a" stroke-opacity="0.221" stroke-width="0.45"/><path d="M493.3 296.3L776.4 251.7" stroke="#a77cc4" stroke-opacity="0.105" stroke-width="0.45"/><path d="M274.5 208.4L208.7 282.7" stroke="#8a6a5a" stroke-opacity="0.238" stroke-width="0.45"/><path d="M112.3 414.9L314.5 177.0" stroke="#a77cc4" stroke-opacity="0.128" stroke-width="0.45"/><path d="M301.0 295.5L303.0 390.8" stroke="#a77cc4" stroke-opacity="0.367" stroke-width="0.45"/><path d="M301.0 295.5L325.0 422.0" stroke="#a77cc4" stroke-opacity="0.383" stroke-width="0.45"/><path d="M301.0 295.5L254.6 381.4" stroke="#a77cc4" stroke-opacity="0.323" stroke-width="0.45"/><path d="M257.0 302.6L303.0 390.8" stroke="#a77cc4" stroke-opacity="0.45" stroke-width="0.45"/><path d="M257.0 302.6L254.6 381.4" stroke="#a77cc4" stroke-opacity="0.398" stroke-width="0.45"/><path d="M257.0 302.6L226.4 355.8" stroke="#a77cc4" stroke-opacity="0.443" stroke-width="0.45"/><path d="M257.0 302.6L189.0 336.0" stroke="#a77cc4" stroke-opacity="0.323" stroke-width="0.45"/><path d="M358.6 333.6L303.0 390.8" stroke="#a77cc4" stroke-opacity="0.39" stroke-width="0.45"/><path d="M358.6 333.6L325.0 422.0" stroke="#a77cc4" stroke-opacity="0.405" stroke-width="0.45"/><path d="M226.4 355.8L256.0 250.0" stroke="#a77cc4" stroke-opacity="0.39" stroke-width="0.45"/><path d="M203.0 283.0L301.0 295.5" stroke="#a77cc4" stroke-opacity="0.307" stroke-width="0.45"/><path d="M203.0 283.0L257.0 302.6" stroke="#a77cc4" stroke-opacity="0.39" stroke-width="0.45"/><path d="M301.0 295.5L358.6 333.6" stroke="#a77cc4" stroke-opacity="0.375" stroke-width="0.45"/><path d="M257.0 302.6L358.6 333.6" stroke="#a77cc4" stroke-opacity="0.427" stroke-width="0.45"/><path d="M302.4 258.9L303.0 390.8" stroke="#a77cc4" stroke-opacity="0.367" stroke-width="0.45"/><path d="M256.0 250.0L254.6 381.4" stroke="#a77cc4" stroke-opacity="0.383" stroke-width="0.45"/><path d="M256.0 250.0L226.4 355.8" stroke="#a77cc4" stroke-opacity="0.345" stroke-width="0.45"/><path d="M358.6 333.6L490.5 292.3" stroke="#a77cc4" stroke-opacity="0.367" stroke-width="0.45"/><path d="M358.6 333.6L517.4 358.0" stroke="#a77cc4" stroke-opacity="0.405" stroke-width="0.45"/><path d="M303.0 390.8L490.5 292.3" stroke="#a77cc4" stroke-opacity="0.338" stroke-width="0.45"/><path d="M325.0 422.0L490.5 292.3" stroke="#a77cc4" stroke-opacity="0.338" stroke-width="0.45"/><path d="M379.7 255.0L358.6 333.6" stroke="#a77cc4" stroke-opacity="0.352" stroke-width="0.45"/><path d="M307.7 206.4L301.0 295.5" stroke="#a77cc4" stroke-opacity="0.398" stroke-width="0.45"/><path d="M369.6 206.4L425.0 236.2" stroke="#a77cc4" stroke-opacity="0.324" stroke-width="0.45"/><path d="M369.6 206.4L379.7 255.0" stroke="#a77cc4" stroke-opacity="0.3" stroke-width="0.45"/><path d="M319.6 176.7L307.7 206.4" stroke="#a77cc4" stroke-opacity="0.21" stroke-width="0.45"/><path d="M265.5 187.6L307.7 206.4" stroke="#a77cc4" stroke-opacity="0.256" stroke-width="0.45"/><path d="M307.7 206.4L302.4 258.9" stroke="#a77cc4" stroke-opacity="0.342" stroke-width="0.45"/><path d="M256.0 250.0L257.0 302.6" stroke="#a77cc4" stroke-opacity="0.39" stroke-width="0.45"/><path d="M231.0 209.5L256.0 250.0" stroke="#a77cc4" stroke-opacity="0.324" stroke-width="0.45"/><path d="M231.0 209.5L257.0 302.6" stroke="#a77cc4" stroke-opacity="0.443" stroke-width="0.45"/><path d="M358.6 333.6L420.0 447.0" stroke="#a77cc4" stroke-opacity="0.315" stroke-width="0.45"/><path d="M358.6 333.6L380.0 447.0" stroke="#a77cc4" stroke-opacity="0.247" stroke-width="0.45"/><path d="M358.6 333.6L470.0 447.0" stroke="#a77cc4" stroke-opacity="0.367" stroke-width="0.45"/><path d="M358.6 333.6L330.0 447.0" stroke="#a77cc4" stroke-opacity="0.375" stroke-width="0.45"/><path d="M301.0 295.5L520.0 447.0" stroke="#a77cc4" stroke-opacity="0.247" stroke-width="0.45"/><path d="M301.0 295.5L178.0 300.0" stroke="#a77cc4" stroke-opacity="0.255" stroke-width="0.45"/><path d="M257.0 302.6L178.0 250.0" stroke="#a77cc4" stroke-opacity="0.375" stroke-width="0.45"/><path d="M358.6 333.6L178.0 330.0" stroke="#a77cc4" stroke-opacity="0.338" stroke-width="0.45"/><path d="M302.4 258.9L373.8 470.0" stroke="#a77cc4" stroke-opacity="0.345" stroke-width="0.45"/><path d="M425.0 236.2L349.0 470.0" stroke="#a77cc4" stroke-opacity="0.188" stroke-width="0.45"/><path d="M425.0 236.2L565.2 470.0" stroke="#a77cc4" stroke-opacity="0.277" stroke-width="0.45"/><path d="M490.5 292.3L434.9 470.0" stroke="#a77cc4" stroke-opacity="0.232" stroke-width="0.45"/><path d="M301.0 295.5L529.0 470.0" stroke="#a77cc4" stroke-opacity="0.345" stroke-width="0.45"/><path d="M517.4 358.0L410.4 470.0" stroke="#a77cc4" stroke-opacity="0.3" stroke-width="0.45"/><path d="M303.0 390.8L564.6 470.0" stroke="#a77cc4" stroke-opacity="0.338" stroke-width="0.45"/><path d="M325.0 422.0L528.7 470.0" stroke="#a77cc4" stroke-opacity="0.225" stroke-width="0.45"/><path d="M257.0 302.6L313.9 470.0" stroke="#a77cc4" stroke-opacity="0.24" stroke-width="0.45"/><path d="M257.0 302.6L503.3 470.0" stroke="#a77cc4" stroke-opacity="0.232" stroke-width="0.45"/><path d="M325.0 422.0L403.4 470.0" stroke="#a77cc4" stroke-opacity="0.232" stroke-width="0.45"/><path d="M490.5 292.3L362.7 470.0" stroke="#a77cc4" stroke-opacity="0.338" stroke-width="0.45"/><path d="M303.0 390.8L468.2 470.0" stroke="#a77cc4" stroke-opacity="0.217" stroke-width="0.45"/><path d="M301.0 295.5L471.9 470.0" stroke="#a77cc4" stroke-opacity="0.27" stroke-width="0.45"/><path d="M301.0 295.5L571.3 470.0" stroke="#a77cc4" stroke-opacity="0.225" stroke-width="0.45"/><path d="M302.4 258.9L503.6 470.0" stroke="#a77cc4" stroke-opacity="0.203" stroke-width="0.45"/><path d="M490.5 292.3L429.6 470.0" stroke="#a77cc4" stroke-opacity="0.27" stroke-width="0.45"/><path d="M379.7 255.0L262.3 470.0" stroke="#a77cc4" stroke-opacity="0.255" stroke-width="0.45"/><path d="M302.4 258.9L621.3 470.0" stroke="#a77cc4" stroke-opacity="0.217" stroke-width="0.45"/><path d="M257.0 302.6L450.6 470.0" stroke="#a77cc4" stroke-opacity="0.292" stroke-width="0.45"/><path d="M256.0 250.0L456.9 470.0" stroke="#a77cc4" stroke-opacity="0.255" stroke-width="0.45"/><path d="M425.0 236.2L292.8 470.0" stroke="#a77cc4" stroke-opacity="0.292" stroke-width="0.45"/><path d="M517.4 358.0L469.0 470.0" stroke="#a77cc4" stroke-opacity="0.225" stroke-width="0.45"/><path d="M490.5 292.3L548.5 470.0" stroke="#a77cc4" stroke-opacity="0.36" stroke-width="0.45"/><path d="M490.5 292.3L563.5 470.0" stroke="#a77cc4" stroke-opacity="0.21" stroke-width="0.45"/><path d="M303.0 390.8L498.4 470.0" stroke="#a77cc4" stroke-opacity="0.3" stroke-width="0.45"/><path d="M517.4 358.0L670.0 414.0" stroke="#a77cc4" stroke-opacity="0.173" stroke-width="0.45"/><path d="M425.0 236.2L670.0 365.5" stroke="#a77cc4" stroke-opacity="0.195" stroke-width="0.45"/><path d="M517.4 358.0L670.0 409.2" stroke="#a77cc4" stroke-opacity="0.217" stroke-width="0.45"/><path d="M517.4 358.0L670.0 337.4" stroke="#a77cc4" stroke-opacity="0.21" stroke-width="0.45"/><path d="M358.6 333.6L670.0 437.6" stroke="#a77cc4" stroke-opacity="0.255" stroke-width="0.45"/><path d="M425.0 236.2L670.0 300.4" stroke="#a77cc4" stroke-opacity="0.255" stroke-width="0.45"/><path d="M358.6 333.6L670.0 350.1" stroke="#a77cc4" stroke-opacity="0.247" stroke-width="0.45"/><path d="M358.6 333.6L670.0 367.1" stroke="#a77cc4" stroke-opacity="0.217" stroke-width="0.45"/><path d="M490.5 292.3L670.0 392.3" stroke="#a77cc4" stroke-opacity="0.203" stroke-width="0.45"/><path d="M358.6 333.6L670.0 419.6" stroke="#a77cc4" stroke-opacity="0.158" stroke-width="0.45"/><path d="M490.5 292.3L130.0 194.3" stroke="#a77cc4" stroke-opacity="0.222" stroke-width="0.45"/><path d="M490.5 292.3L335.0 609.0" stroke="#a77cc4" stroke-opacity="0.255" stroke-width="0.45"/><path d="M490.5 292.3L465.5 412.9" stroke="#a77cc4" stroke-opacity="0.307" stroke-width="0.45"/><path d="M490.5 292.3L301.1 307.4" stroke="#a77cc4" stroke-opacity="0.165" stroke-width="0.45"/><path d="M490.5 292.3L408.0 458.4" stroke="#a77cc4" stroke-opacity="0.277" stroke-width="0.45"/><path d="M490.5 292.3L366.1 397.3" stroke="#a77cc4" stroke-opacity="0.3" stroke-width="0.45"/><path d="M490.5 292.3L326.6 260.3" stroke="#a77cc4" stroke-opacity="0.3" stroke-width="0.45"/><path d="M490.5 292.3L156.9 351.3" stroke="#a77cc4" stroke-opacity="0.262" stroke-width="0.45"/><path d="M490.5 292.3L176.5 160.3" stroke="#a77cc4" stroke-opacity="0.228" stroke-width="0.45"/><path d="M490.5 292.3L320.9 556.5" stroke="#a77cc4" stroke-opacity="0.24" stroke-width="0.45"/><path d="M490.5 292.3L248.7 269.8" stroke="#a77cc4" stroke-opacity="0.292" stroke-width="0.45"/><path d="M490.5 292.3L304.1 346.3" stroke="#a77cc4" stroke-opacity="0.188" stroke-width="0.45"/><path d="M490.5 292.3L377.3 524.2" stroke="#a77cc4" stroke-opacity="0.158" stroke-width="0.45"/><path d="M490.5 292.3L346.7 363.3" stroke="#a77cc4" stroke-opacity="0.232" stroke-width="0.45"/><path d="M490.5 292.3L240.4 397.0" stroke="#a77cc4" stroke-opacity="0.292" stroke-width="0.45"/><path d="M490.5 292.3L424.1 641.5" stroke="#a77cc4" stroke-opacity="0.225" stroke-width="0.45"/><path d="M490.5 292.3L195.1 373.1" stroke="#a77cc4" stroke-opacity="0.285" stroke-width="0.45"/><path d="M490.5 292.3L300.7 434.7" stroke="#a77cc4" stroke-opacity="0.307" stroke-width="0.45"/><path d="M490.5 292.3L395.0 575.0" stroke="#a77cc4" stroke-opacity="0.255" stroke-width="0.45"/><path d="M490.5 292.3L423.7 575.2" stroke="#a77cc4" stroke-opacity="0.262" stroke-width="0.45"/><path d="M490.5 292.3L301.3 195.4" stroke="#a77cc4" stroke-opacity="0.252" stroke-width="0.45"/><path d="M490.5 292.3L252.2 385.1" stroke="#a77cc4" stroke-opacity="0.3" stroke-width="0.45"/><path d="M544.6 187.6L239.0 29.9" stroke="#b77ad0" stroke-opacity="0.27" stroke-width="0.45"/><path d="M544.6 187.6L162.4 168.2" stroke="#b77ad0" stroke-opacity="0.217" stroke-width="0.45"/><path d="M544.6 187.6L255.5 228.0" stroke="#b77ad0" stroke-opacity="0.292" stroke-width="0.45"/><path d="M544.6 187.6L284.1 126.8" stroke="#b77ad0" stroke-opacity="0.232" stroke-width="0.45"/><path d="M544.6 187.6L183.0 279.9" stroke="#b77ad0" stroke-opacity="0.203" stroke-width="0.45"/><path d="M544.6 187.6L335.6 340.6" stroke="#b77ad0" stroke-opacity="0.247" stroke-width="0.45"/><path d="M544.6 187.6L260.8 146.4" stroke="#b77ad0" stroke-opacity="0.33" stroke-width="0.45"/><path d="M544.6 187.6L208.1 326.0" stroke="#b77ad0" stroke-opacity="0.21" stroke-width="0.45"/><path d="M544.6 187.6L314.6 169.0" stroke="#b77ad0" stroke-opacity="0.262" stroke-width="0.45"/><path d="M544.6 187.6L206.4 316.0" stroke="#b77ad0" stroke-opacity="0.158" stroke-width="0.45"/><path d="M544.6 187.6L200.4 369.2" stroke="#b77ad0" stroke-opacity="0.255" stroke-width="0.45"/><path d="M544.6 187.6L336.9 86.2" stroke="#b77ad0" stroke-opacity="0.15" stroke-width="0.45"/><path d="M544.6 187.6L159.1 85.7" stroke="#b77ad0" stroke-opacity="0.262" stroke-width="0.45"/><path d="M544.6 187.6L209.5 327.4" stroke="#b77ad0" stroke-opacity="0.323" stroke-width="0.45"/><path d="M544.6 187.6L662.0 132.4" stroke="#86b43a" stroke-opacity="0.348" stroke-width="0.45"/><path d="M544.6 187.6L662.0 139.8" stroke="#86b43a" stroke-opacity="0.357" stroke-width="0.45"/><path d="M544.6 187.6L662.0 124.1" stroke="#86b43a" stroke-opacity="0.255" stroke-width="0.45"/><path d="M544.6 187.6L662.0 141.3" stroke="#86b43a" stroke-opacity="0.357" stroke-width="0.45"/><path d="M544.6 187.6L662.0 106.3" stroke="#86b43a" stroke-opacity="0.238" stroke-width="0.45"/><path d="M544.6 187.6L662.0 200.0" stroke="#86b43a" stroke-opacity="0.255" stroke-width="0.45"/><path d="M544.6 187.6L662.0 255.6" stroke="#86b43a" stroke-opacity="0.408" stroke-width="0.45"/><path d="M544.6 187.6L662.0 197.9" stroke="#86b43a" stroke-opacity="0.348" stroke-width="0.45"/><path d="M544.6 187.6L662.0 123.1" stroke="#86b43a" stroke-opacity="0.383" stroke-width="0.45"/><path d="M544.6 187.6L662.0 241.4" stroke="#86b43a" stroke-opacity="0.332" stroke-width="0.45"/><path d="M544.6 187.6L662.0 178.1" stroke="#86b43a" stroke-opacity="0.306" stroke-width="0.45"/><path d="M544.6 187.6L662.0 218.1" stroke="#86b43a" stroke-opacity="0.281" stroke-width="0.45"/><path d="M544.6 187.6L662.0 121.5" stroke="#86b43a" stroke-opacity="0.408" stroke-width="0.45"/><path d="M544.6 187.6L662.0 207.2" stroke="#86b43a" stroke-opacity="0.221" stroke-width="0.45"/><path d="M544.6 187.6L662.0 168.4" stroke="#86b43a" stroke-opacity="0.238" stroke-width="0.45"/><path d="M544.6 187.6L662.0 174.8" stroke="#86b43a" stroke-opacity="0.383" stroke-width="0.45"/><path d="M544.6 187.6L662.0 98.0" stroke="#86b43a" stroke-opacity="0.306" stroke-width="0.45"/><path d="M544.6 187.6L662.0 134.1" stroke="#86b43a" stroke-opacity="0.212" stroke-width="0.45"/><path d="M654.0 176.7L494.7 336.1" stroke="#86b43a" stroke-opacity="0.34" stroke-width="0.45"/><path d="M654.0 176.7L466.0 252.6" stroke="#86b43a" stroke-opacity="0.281" stroke-width="0.45"/><path d="M654.0 176.7L424.3 192.2" stroke="#86b43a" stroke-opacity="0.17" stroke-width="0.45"/><path d="M654.0 176.7L419.5 395.9" stroke="#86b43a" stroke-opacity="0.187" stroke-width="0.45"/><path d="M654.0 176.7L420.6 317.3" stroke="#86b43a" stroke-opacity="0.289" stroke-width="0.45"/><path d="M654.0 176.7L517.4 218.5" stroke="#86b43a" stroke-opacity="0.178" stroke-width="0.45"/><path d="M654.0 176.7L514.2 399.7" stroke="#86b43a" stroke-opacity="0.297" stroke-width="0.45"/><path d="M654.0 176.7L500.6 251.1" stroke="#86b43a" stroke-opacity="0.246" stroke-width="0.45"/><path d="M654.0 176.7L440.6 442.9" stroke="#86b43a" stroke-opacity="0.289" stroke-width="0.45"/><path d="M654.0 176.7L402.4 230.2" stroke="#86b43a" stroke-opacity="0.306" stroke-width="0.45"/><path d="M544.6 187.6L425.0 236.2" stroke="#86b43a" stroke-opacity="0.51" stroke-width="0.45"/><path d="M544.6 187.6L424.0 238.0" stroke="#86b43a" stroke-opacity="0.383" stroke-width="0.45"/><path d="M544.6 187.6L490.5 292.3" stroke="#86b43a" stroke-opacity="0.34" stroke-width="0.45"/><path d="M425.0 236.2L662.0 150.0" stroke="#86b43a" stroke-opacity="0.383" stroke-width="0.45"/><path d="M425.0 236.2L662.0 122.0" stroke="#86b43a" stroke-opacity="0.255" stroke-width="0.45"/><path d="M490.5 292.3L662.0 240.0" stroke="#86b43a" stroke-opacity="0.425" stroke-width="0.45"/><path d="M490.5 292.3L662.0 262.0" stroke="#86b43a" stroke-opacity="0.34" stroke-width="0.45"/><path d="M490.5 292.3L662.0 292.0" stroke="#86b43a" stroke-opacity="0.255" stroke-width="0.45"/><path d="M490.5 292.3L654.0 176.7" stroke="#86b43a" stroke-opacity="0.383" stroke-width="0.45"/><path d="M490.5 292.3L560.0 272.0" stroke="#86b43a" stroke-opacity="0.383" stroke-width="0.45"/><path d="M490.5 292.3L530.0 270.0" stroke="#86b43a" stroke-opacity="0.297" stroke-width="0.45"/><path d="M540.0 125.0L544.6 187.6" stroke="#86b43a" stroke-opacity="0.34" stroke-width="0.45"/><path d="M540.0 125.0L590.0 130.0" stroke="#86b43a" stroke-opacity="0.255" stroke-width="0.45"/><path d="M540.0 125.0L552.0 445.0" stroke="#7a5a3a" stroke-opacity="0.297" stroke-width="0.45"/><path d="M632.0 428.0L657.0 347.0" stroke="#86b43a" stroke-opacity="0.425" stroke-width="0.45"/><path d="M654.0 176.7L600.0 97.0" stroke="#86b43a" stroke-opacity="0.212" stroke-width="0.45"/><path d="M337.4 97.0L381.0 166.0" stroke="#e8962e" stroke-opacity="0.468" stroke-width="0.6"/><path d="M381.0 166.0L425.0 236.2" stroke="#e8962e" stroke-opacity="0.68" stroke-width="0.7"/><path d="M425.0 236.2L301.0 295.5" stroke="#e8962e" stroke-opacity="0.68" stroke-width="0.7"/><path d="M425.0 236.2L406.0 262.0" stroke="#e8962e" stroke-opacity="0.68" stroke-width="0.7"/><path d="M406.0 262.0L379.7 255.0" stroke="#e8962e" stroke-opacity="0.595" stroke-width="0.7"/><path d="M406.0 262.0L396.5 264.0" stroke="#e8962e" stroke-opacity="0.595" stroke-width="0.45"/><path d="M425.0 236.2L300.0 291.0" stroke="#e8962e" stroke-opacity="0.468" stroke-width="0.45"/><path d="M379.7 255.0L301.0 295.5" stroke="#e8962e" stroke-opacity="0.468" stroke-width="0.45"/><path d="M379.7 255.0L357.8 333.0" stroke="#e8962e" stroke-opacity="0.34" stroke-width="0.45"/><path d="M301.0 295.5L302.4 258.9" stroke="#e8962e" stroke-opacity="0.51" stroke-width="0.45"/><path d="M301.0 295.5L257.0 302.6" stroke="#e8962e" stroke-opacity="0.51" stroke-width="0.45"/><path d="M301.0 295.5L385.0 268.0" stroke="#e8962e" stroke-opacity="0.425" stroke-width="0.45"/><path d="M301.0 295.5L278.0 283.0" stroke="#e8962e" stroke-opacity="0.425" stroke-width="0.45"/><path d="M358.6 333.6L372.0 300.0" stroke="#e8962e" stroke-opacity="0.383" stroke-width="0.45"/><path d="M579.0 97.0L656.0 174.0" stroke="#e8962e" stroke-opacity="0.468" stroke-width="0.6"/><path d="M490.5 292.3L556.4 339.8" stroke="#e8962e" stroke-opacity="0.255" stroke-width="0.45"/><path d="M425.0 236.2L490.5 292.3" stroke="#c08a5a" stroke-opacity="0.255" stroke-width="0.45"/><path d="M302.4 258.9L380.0 254.0" stroke="#e8962e" stroke-opacity="0.297" stroke-width="0.45"/><path d="M418.0 240.0L300.0 262.0" stroke="#e8962e" stroke-opacity="0.255" stroke-width="0.45"/><path d="M497.7 272.0L649.0 445.0" stroke="#2fa3bd" stroke-opacity="0.637" stroke-width="0.7"/><path d="M462.0 225.0L497.7 272.0" stroke="#2fa3bd" stroke-opacity="0.425" stroke-width="0.45"/><path d="M425.0 340.0L445.0 372.0" stroke="#2fa3bd" stroke-opacity="0.383" stroke-width="0.45"/><path d="M517.4 358.0L656.0 392.0" stroke="#c98ad8" stroke-opacity="0.51" stroke-width="0.45"/><path d="M556.4 339.8L517.4 358.0" stroke="#a06a70" stroke-opacity="0.425" stroke-width="0.45"/><path d="M556.4 339.8L624.0 350.0" stroke="#a77cc4" stroke-opacity="0.262" stroke-width="0.45"/><path d="M624.0 350.0L560.0 445.0" stroke="#8a5a6a" stroke-opacity="0.255" stroke-width="0.45"/><path d="M490.5 292.3L517.4 358.0" stroke="#a77cc4" stroke-opacity="0.225" stroke-width="0.45"/><circle cx="369.6" cy="206.4" r="1.3" fill="#e27cf2"/><circle cx="517.4" cy="358.0" r="1.3" fill="#e27cf2"/><circle cx="544.6" cy="187.6" r="1.0" fill="#e58ad0"/><circle cx="425.0" cy="236.2" r="0.9" fill="#f0a030"/><circle cx="490.5" cy="292.3" r="1.0" fill="#f0a030"/><circle cx="556.4" cy="339.8" r="0.9" fill="#e8902a"/><circle cx="301.0" cy="295.5" r="0.9" fill="#f0a030"/><circle cx="379.7" cy="255.0" r="0.8" fill="#e79a9a"/><circle cx="302.4" cy="258.9" r="0.7" fill="#f0b060"/><circle cx="358.6" cy="333.6" r="0.7" fill="#e8a060"/><circle cx="257.0" cy="302.6" r="0.7" fill="#e0a070"/><circle cx="632.0" cy="428.0" r="0.7" fill="#2fa3bd"/><circle cx="540.0" cy="125.0" r="0.7" fill="#86c43a"/><circle cx="225.0" cy="155.4" r="0.6" fill="#b78ad4"/><circle cx="284.0" cy="140.8" r="0.6" fill="#b78ad4"/><circle cx="319.6" cy="176.7" r="0.6" fill="#b78ad4"/><circle cx="398.0" cy="120.4" r="0.6" fill="#b78ad4"/><circle cx="385.8" cy="158.6" r="0.6" fill="#b78ad4"/><circle cx="231.0" cy="209.5" r="0.6" fill="#b78ad4"/><circle cx="265.5" cy="187.6" r="0.6" fill="#b78ad4"/><circle cx="256.0" cy="250.0" r="0.6" fill="#b78ad4"/><circle cx="307.7" cy="206.4" r="0.6" fill="#b78ad4"/><circle cx="189.0" cy="336.0" r="0.6" fill="#b78ad4"/><circle cx="226.4" cy="355.8" r="0.6" fill="#b78ad4"/><circle cx="203.0" cy="283.0" r="0.6" fill="#b78ad4"/><circle cx="303.0" cy="390.8" r="0.6" fill="#b78ad4"/><circle cx="325.0" cy="422.0" r="0.6" fill="#b78ad4"/><circle cx="254.6" cy="381.4" r="0.6" fill="#b78ad4"/><circle cx="216.1" cy="205.5" r="0.35" fill="#7a5a8a" fill-opacity="0.42"/><circle cx="257.3" cy="397.2" r="0.35" fill="#7a5a8a" fill-opacity="0.35"/><circle cx="206.6" cy="225.2" r="0.35" fill="#7a5a8a" fill-opacity="0.37"/><circle cx="387.5" cy="333.1" r="0.35" fill="#7a5a8a" fill-opacity="0.24"/><circle cx="558.8" cy="223.7" r="0.35" fill="#7a5a8a" fill-opacity="0.39"/><circle cx="478.7" cy="242.8" r="0.35" fill="#7a5a8a" fill-opacity="0.32"/><circle cx="553.5" cy="426.5" r="0.35" fill="#7a5a8a" fill-opacity="0.44"/><circle cx="448.7" cy="199.0" r="0.35" fill="#7a5a8a" fill-opacity="0.22"/><circle cx="643.2" cy="342.3" r="0.35" fill="#7a5a8a" fill-opacity="0.45"/><circle cx="336.6" cy="308.3" r="0.35" fill="#7a5a8a" fill-opacity="0.49"/><circle cx="575.0" cy="306.7" r="0.35" fill="#7a5a8a" fill-opacity="0.29"/><circle cx="382.7" cy="406.7" r="0.35" fill="#7a5a8a" fill-opacity="0.31"/><circle cx="505.1" cy="306.9" r="0.35" fill="#7a5a8a" fill-opacity="0.47"/><circle cx="563.7" cy="195.9" r="0.35" fill="#7a5a8a" fill-opacity="0.20"/><circle cx="303.6" cy="244.4" r="0.35" fill="#7a5a8a" fill-opacity="0.38"/><circle cx="567.7" cy="406.5" r="0.35" fill="#7a5a8a" fill-opacity="0.21"/><circle cx="576.0" cy="380.1" r="0.35" fill="#7a5a8a" fill-opacity="0.46"/><circle cx="451.1" cy="192.6" r="0.35" fill="#7a5a8a" fill-opacity="0.46"/><circle cx="563.4" cy="335.8" r="0.35" fill="#7a5a8a" fill-opacity="0.47"/><circle cx="343.7" cy="126.8" r="0.35" fill="#7a5a8a" fill-opacity="0.37"/><circle cx="558.8" cy="167.0" r="0.35" fill="#7a5a8a" fill-opacity="0.43"/><circle cx="623.0" cy="178.7" r="0.35" fill="#7a5a8a" fill-opacity="0.38"/><circle cx="501.7" cy="259.3" r="0.35" fill="#7a5a8a" fill-opacity="0.26"/><circle cx="299.7" cy="358.9" r="0.35" fill="#7a5a8a" fill-opacity="0.44"/><circle cx="397.6" cy="127.7" r="0.35" fill="#7a5a8a" fill-opacity="0.44"/><circle cx="546.8" cy="178.3" r="0.35" fill="#7a5a8a" fill-opacity="0.37"/><circle cx="606.4" cy="405.6" r="0.35" fill="#7a5a8a" fill-opacity="0.36"/><circle cx="405.6" cy="302.5" r="0.35" fill="#7a5a8a" fill-opacity="0.26"/><circle cx="269.8" cy="160.1" r="0.35" fill="#7a5a8a" fill-opacity="0.41"/><circle cx="351.3" cy="293.9" r="0.35" fill="#7a5a8a" fill-opacity="0.32"/><circle cx="425.0" cy="149.0" r="0.35" fill="#7a5a8a" fill-opacity="0.21"/><circle cx="654.2" cy="227.5" r="0.35" fill="#7a5a8a" fill-opacity="0.23"/><circle cx="480.2" cy="371.6" r="0.35" fill="#7a5a8a" fill-opacity="0.25"/><circle cx="463.2" cy="217.3" r="0.35" fill="#7a5a8a" fill-opacity="0.36"/><circle cx="187.8" cy="108.8" r="0.35" fill="#7a5a8a" fill-opacity="0.50"/><circle cx="591.6" cy="266.6" r="0.35" fill="#7a5a8a" fill-opacity="0.37"/><circle cx="302.9" cy="368.7" r="0.35" fill="#7a5a8a" fill-opacity="0.33"/><circle cx="630.0" cy="364.6" r="0.35" fill="#7a5a8a" fill-opacity="0.45"/><circle cx="638.2" cy="185.6" r="0.35" fill="#7a5a8a" fill-opacity="0.21"/><circle cx="274.0" cy="160.1" r="0.35" fill="#7a5a8a" fill-opacity="0.23"/><circle cx="202.4" cy="291.4" r="0.35" fill="#7a5a8a" fill-opacity="0.46"/><circle cx="396.9" cy="427.3" r="0.35" fill="#7a5a8a" fill-opacity="0.47"/><circle cx="208.7" cy="305.6" r="0.35" fill="#7a5a8a" fill-opacity="0.32"/><circle cx="235.3" cy="431.5" r="0.35" fill="#7a5a8a" fill-opacity="0.28"/><circle cx="447.6" cy="320.4" r="0.35" fill="#7a5a8a" fill-opacity="0.49"/><circle cx="497.9" cy="234.1" r="0.35" fill="#7a5a8a" fill-opacity="0.33"/><circle cx="254.3" cy="433.8" r="0.35" fill="#7a5a8a" fill-opacity="0.50"/><circle cx="283.9" cy="110.6" r="0.35" fill="#7a5a8a" fill-opacity="0.28"/><circle cx="346.1" cy="411.8" r="0.35" fill="#7a5a8a" fill-opacity="0.47"/><circle cx="577.9" cy="113.5" r="0.35" fill="#7a5a8a" fill-opacity="0.44"/><circle cx="516.9" cy="322.5" r="0.35" fill="#7a5a8a" fill-opacity="0.50"/><circle cx="204.6" cy="147.6" r="0.35" fill="#7a5a8a" fill-opacity="0.43"/><circle cx="626.6" cy="333.1" r="0.35" fill="#7a5a8a" fill-opacity="0.29"/><circle cx="460.5" cy="361.3" r="0.35" fill="#7a5a8a" fill-opacity="0.23"/><circle cx="332.7" cy="186.7" r="0.35" fill="#7a5a8a" fill-opacity="0.24"/><circle cx="407.9" cy="155.9" r="0.35" fill="#7a5a8a" fill-opacity="0.27"/><circle cx="246.4" cy="333.3" r="0.35" fill="#7a5a8a" fill-opacity="0.20"/><circle cx="520.5" cy="165.1" r="0.35" fill="#7a5a8a" fill-opacity="0.21"/><circle cx="621.1" cy="174.0" r="0.35" fill="#7a5a8a" fill-opacity="0.48"/><circle cx="592.0" cy="406.9" r="0.35" fill="#7a5a8a" fill-opacity="0.24"/><circle cx="391.6" cy="130.9" r="0.35" fill="#7a5a8a" fill-opacity="0.48"/><circle cx="580.3" cy="316.2" r="0.35" fill="#7a5a8a" fill-opacity="0.34"/><circle cx="340.3" cy="384.0" r="0.35" fill="#7a5a8a" fill-opacity="0.34"/><circle cx="478.0" cy="146.9" r="0.35" fill="#7a5a8a" fill-opacity="0.27"/><circle cx="205.1" cy="345.9" r="0.35" fill="#7a5a8a" fill-opacity="0.37"/><circle cx="247.1" cy="400.6" r="0.35" fill="#7a5a8a" fill-opacity="0.28"/><circle cx="374.7" cy="151.4" r="0.35" fill="#7a5a8a" fill-opacity="0.28"/><circle cx="579.0" cy="213.7" r="0.35" fill="#7a5a8a" fill-opacity="0.25"/><circle cx="412.5" cy="208.0" r="0.35" fill="#7a5a8a" fill-opacity="0.47"/><circle cx="232.5" cy="438.2" r="0.35" fill="#7a5a8a" fill-opacity="0.22"/><circle cx="605.5" cy="330.1" r="0.35" fill="#7a5a8a" fill-opacity="0.26"/><circle cx="406.0" cy="196.9" r="0.35" fill="#7a5a8a" fill-opacity="0.28"/><circle cx="274.3" cy="224.1" r="0.35" fill="#7a5a8a" fill-opacity="0.50"/><circle cx="654.7" cy="419.6" r="0.35" fill="#7a5a8a" fill-opacity="0.23"/><circle cx="316.2" cy="409.5" r="0.35" fill="#7a5a8a" fill-opacity="0.22"/><circle cx="525.0" cy="199.4" r="0.35" fill="#7a5a8a" fill-opacity="0.49"/><circle cx="185.7" cy="378.4" r="0.35" fill="#7a5a8a" fill-opacity="0.30"/><circle cx="244.9" cy="97.8" r="0.35" fill="#7a5a8a" fill-opacity="0.45"/><circle cx="429.5" cy="161.9" r="0.35" fill="#7a5a8a" fill-opacity="0.33"/><circle cx="613.6" cy="173.2" r="0.35" fill="#7a5a8a" fill-opacity="0.37"/><circle cx="243.9" cy="159.9" r="0.35" fill="#7a5a8a" fill-opacity="0.43"/><circle cx="517.9" cy="165.7" r="0.35" fill="#7a5a8a" fill-opacity="0.22"/><circle cx="219.8" cy="309.2" r="0.35" fill="#7a5a8a" fill-opacity="0.35"/><circle cx="308.8" cy="168.9" r="0.35" fill="#7a5a8a" fill-opacity="0.38"/><circle cx="516.0" cy="380.0" r="0.35" fill="#7a5a8a" fill-opacity="0.37"/><circle cx="274.6" cy="120.0" r="0.35" fill="#7a5a8a" fill-opacity="0.42"/><circle cx="372.9" cy="348.7" r="0.35" fill="#7a5a8a" fill-opacity="0.22"/><circle cx="565.2" cy="214.0" r="0.35" fill="#7a5a8a" fill-opacity="0.45"/><circle cx="590.9" cy="269.0" r="0.35" fill="#7a5a8a" fill-opacity="0.20"/><circle cx="612.7" cy="263.2" r="0.35" fill="#7a5a8a" fill-opacity="0.46"/><circle cx="305.2" cy="162.0" r="0.35" fill="#7a5a8a" fill-opacity="0.45"/><circle cx="353.3" cy="154.1" r="0.35" fill="#7a5a8a" fill-opacity="0.31"/><circle cx="462.1" cy="98.7" r="0.35" fill="#7a5a8a" fill-opacity="0.36"/><circle cx="390.9" cy="276.8" r="0.35" fill="#7a5a8a" fill-opacity="0.24"/><circle cx="519.3" cy="381.7" r="0.35" fill="#7a5a8a" fill-opacity="0.46"/><circle cx="331.3" cy="345.0" r="0.35" fill="#7a5a8a" fill-opacity="0.31"/><circle cx="536.8" cy="118.4" r="0.35" fill="#7a5a8a" fill-opacity="0.46"/><circle cx="633.7" cy="269.6" r="0.35" fill="#7a5a8a" fill-opacity="0.35"/><circle cx="431.4" cy="284.4" r="0.35" fill="#7a5a8a" fill-opacity="0.21"/><circle cx="640.0" cy="175.1" r="0.35" fill="#7a5a8a" fill-opacity="0.25"/><circle cx="227.0" cy="184.4" r="0.35" fill="#7a5a8a" fill-opacity="0.45"/><circle cx="192.4" cy="130.7" r="0.35" fill="#7a5a8a" fill-opacity="0.41"/><circle cx="271.2" cy="103.3" r="0.35" fill="#7a5a8a" fill-opacity="0.38"/><circle cx="453.3" cy="279.4" r="0.35" fill="#7a5a8a" fill-opacity="0.41"/><circle cx="227.1" cy="400.2" r="0.35" fill="#7a5a8a" fill-opacity="0.42"/><circle cx="199.6" cy="140.0" r="0.35" fill="#7a5a8a" fill-opacity="0.35"/><circle cx="417.2" cy="194.6" r="0.35" fill="#7a5a8a" fill-opacity="0.24"/><circle cx="371.7" cy="144.8" r="0.35" fill="#7a5a8a" fill-opacity="0.38"/><circle cx="589.3" cy="148.4" r="0.35" fill="#7a5a8a" fill-opacity="0.37"/><circle cx="534.6" cy="154.4" r="0.35" fill="#7a5a8a" fill-opacity="0.45"/><circle cx="625.8" cy="232.6" r="0.35" fill="#7a5a8a" fill-opacity="0.33"/><circle cx="579.1" cy="280.3" r="0.35" fill="#7a5a8a" fill-opacity="0.32"/><circle cx="627.6" cy="367.9" r="0.35" fill="#7a5a8a" fill-opacity="0.30"/><circle cx="292.8" cy="213.9" r="0.35" fill="#7a5a8a" fill-opacity="0.33"/><circle cx="646.6" cy="377.5" r="0.35" fill="#7a5a8a" fill-opacity="0.47"/><circle cx="567.3" cy="392.6" r="0.35" fill="#7a5a8a" fill-opacity="0.22"/><circle cx="425.1" cy="431.0" r="0.35" fill="#7a5a8a" fill-opacity="0.48"/><circle cx="297.1" cy="244.3" r="0.35" fill="#7a5a8a" fill-opacity="0.39"/><circle cx="352.1" cy="282.1" r="0.35" fill="#7a5a8a" fill-opacity="0.22"/><circle cx="384.8" cy="273.1" r="0.35" fill="#7a5a8a" fill-opacity="0.21"/><circle cx="244.6" cy="435.1" r="0.35" fill="#7a5a8a" fill-opacity="0.43"/><circle cx="625.5" cy="317.8" r="0.35" fill="#7a5a8a" fill-opacity="0.44"/><circle cx="600.4" cy="405.5" r="0.35" fill="#7a5a8a" fill-opacity="0.21"/><circle cx="484.4" cy="189.7" r="0.35" fill="#7a5a8a" fill-opacity="0.40"/><circle cx="308.6" cy="286.1" r="0.35" fill="#7a5a8a" fill-opacity="0.48"/><circle cx="474.7" cy="184.5" r="0.35" fill="#7a5a8a" fill-opacity="0.36"/><circle cx="385.1" cy="428.6" r="0.35" fill="#7a5a8a" fill-opacity="0.29"/><circle cx="323.9" cy="322.8" r="0.35" fill="#7a5a8a" fill-opacity="0.24"/><circle cx="461.8" cy="430.4" r="0.35" fill="#7a5a8a" fill-opacity="0.35"/><circle cx="306.2" cy="259.7" r="0.35" fill="#7a5a8a" fill-opacity="0.36"/><circle cx="248.9" cy="140.3" r="0.35" fill="#7a5a8a" fill-opacity="0.24"/><circle cx="318.2" cy="238.8" r="0.35" fill="#7a5a8a" fill-opacity="0.29"/><circle cx="294.2" cy="127.7" r="0.35" fill="#7a5a8a" fill-opacity="0.36"/><circle cx="579.1" cy="309.7" r="0.35" fill="#7a5a8a" fill-opacity="0.37"/><circle cx="488.6" cy="167.2" r="0.35" fill="#7a5a8a" fill-opacity="0.41"/><circle cx="398.1" cy="288.1" r="0.35" fill="#7a5a8a" fill-opacity="0.38"/><circle cx="402.0" cy="205.3" r="0.35" fill="#7a5a8a" fill-opacity="0.27"/><circle cx="283.8" cy="275.7" r="0.35" fill="#7a5a8a" fill-opacity="0.31"/><circle cx="457.7" cy="101.2" r="0.35" fill="#7a5a8a" fill-opacity="0.31"/><circle cx="589.6" cy="180.3" r="0.35" fill="#7a5a8a" fill-opacity="0.37"/><circle cx="412.7" cy="196.4" r="0.35" fill="#7a5a8a" fill-opacity="0.50"/><circle cx="319.1" cy="366.3" r="0.35" fill="#7a5a8a" fill-opacity="0.25"/><circle cx="209.9" cy="400.8" r="0.35" fill="#7a5a8a" fill-opacity="0.33"/><circle cx="207.6" cy="232.3" r="0.35" fill="#7a5a8a" fill-opacity="0.33"/><circle cx="529.2" cy="135.2" r="0.35" fill="#7a5a8a" fill-opacity="0.27"/><circle cx="636.2" cy="354.6" r="0.35" fill="#7a5a8a" fill-opacity="0.25"/><circle cx="339.0" cy="220.0" r="0.35" fill="#7a5a8a" fill-opacity="0.40"/><circle cx="472.3" cy="393.4" r="0.35" fill="#7a5a8a" fill-opacity="0.45"/><circle cx="425.3" cy="354.6" r="0.35" fill="#7a5a8a" fill-opacity="0.42"/><circle cx="540.8" cy="262.8" r="0.35" fill="#7a5a8a" fill-opacity="0.44"/><circle cx="516.4" cy="416.0" r="0.35" fill="#7a5a8a" fill-opacity="0.24"/><circle cx="593.9" cy="98.6" r="0.35" fill="#7a5a8a" fill-opacity="0.43"/><circle cx="457.8" cy="270.7" r="0.35" fill="#7a5a8a" fill-opacity="0.49"/><circle cx="451.2" cy="242.8" r="0.35" fill="#7a5a8a" fill-opacity="0.44"/><circle cx="594.8" cy="308.8" r="0.35" fill="#7a5a8a" fill-opacity="0.31"/><circle cx="394.0" cy="256.7" r="0.35" fill="#7a5a8a" fill-opacity="0.42"/><circle cx="317.9" cy="233.3" r="0.35" fill="#7a5a8a" fill-opacity="0.37"/><circle cx="361.6" cy="209.3" r="0.35" fill="#7a5a8a" fill-opacity="0.44"/><circle cx="583.8" cy="271.2" r="0.35" fill="#7a5a8a" fill-opacity="0.33"/><circle cx="266.0" cy="203.1" r="0.35" fill="#7a5a8a" fill-opacity="0.24"/><circle cx="452.8" cy="299.8" r="0.35" fill="#7a5a8a" fill-opacity="0.23"/><circle cx="617.5" cy="210.0" r="0.35" fill="#7a5a8a" fill-opacity="0.45"/><circle cx="578.3" cy="431.3" r="0.35" fill="#7a5a8a" fill-opacity="0.26"/><circle cx="381.7" cy="414.5" r="0.35" fill="#7a5a8a" fill-opacity="0.20"/><circle cx="200.7" cy="294.0" r="0.35" fill="#7a5a8a" fill-opacity="0.35"/><circle cx="617.5" cy="366.7" r="0.35" fill="#7a5a8a" fill-opacity="0.36"/><circle cx="654.8" cy="277.5" r="0.35" fill="#7a5a8a" fill-opacity="0.36"/><circle cx="505.3" cy="232.9" r="0.35" fill="#7a5a8a" fill-opacity="0.31"/><circle cx="462.0" cy="219.5" r="0.35" fill="#7a5a8a" fill-opacity="0.48"/><circle cx="501.1" cy="280.2" r="0.35" fill="#7a5a8a" fill-opacity="0.23"/><circle cx="356.8" cy="236.9" r="0.35" fill="#7a5a8a" fill-opacity="0.37"/><circle cx="452.2" cy="403.8" r="0.35" fill="#7a5a8a" fill-opacity="0.49"/><circle cx="410.5" cy="250.5" r="0.35" fill="#7a5a8a" fill-opacity="0.39"/><circle cx="653.7" cy="216.8" r="0.35" fill="#7a5a8a" fill-opacity="0.36"/><circle cx="567.7" cy="156.6" r="0.35" fill="#7a5a8a" fill-opacity="0.30"/><circle cx="645.3" cy="385.1" r="0.35" fill="#7a5a8a" fill-opacity="0.35"/><circle cx="230.8" cy="408.9" r="0.35" fill="#7a5a8a" fill-opacity="0.41"/><circle cx="569.9" cy="442.3" r="0.35" fill="#7a5a8a" fill-opacity="0.47"/><circle cx="379.0" cy="151.6" r="0.35" fill="#7a5a8a" fill-opacity="0.29"/><circle cx="422.3" cy="273.1" r="0.35" fill="#7a5a8a" fill-opacity="0.26"/><circle cx="265.1" cy="316.8" r="0.35" fill="#7a5a8a" fill-opacity="0.38"/><circle cx="346.7" cy="443.5" r="0.35" fill="#7a5a8a" fill-opacity="0.39"/><circle cx="198.2" cy="240.5" r="0.35" fill="#7a5a8a" fill-opacity="0.44"/><circle cx="324.5" cy="337.9" r="0.35" fill="#7a5a8a" fill-opacity="0.20"/><circle cx="323.4" cy="390.7" r="0.35" fill="#7a5a8a" fill-opacity="0.38"/><circle cx="497.1" cy="165.7" r="0.35" fill="#7a5a8a" fill-opacity="0.35"/><circle cx="442.2" cy="189.8" r="0.35" fill="#7a5a8a" fill-opacity="0.39"/><circle cx="431.8" cy="444.7" r="0.35" fill="#7a5a8a" fill-opacity="0.37"/><circle cx="374.3" cy="139.5" r="0.35" fill="#7a5a8a" fill-opacity="0.25"/><circle cx="540.7" cy="134.3" r="0.35" fill="#7a5a8a" fill-opacity="0.23"/><circle cx="259.4" cy="279.2" r="0.35" fill="#7a5a8a" fill-opacity="0.45"/><circle cx="470.8" cy="378.3" r="0.35" fill="#7a5a8a" fill-opacity="0.22"/><circle cx="184.0" cy="365.7" r="0.35" fill="#7a5a8a" fill-opacity="0.30"/><circle cx="519.7" cy="220.5" r="0.35" fill="#7a5a8a" fill-opacity="0.25"/><circle cx="305.3" cy="131.8" r="0.35" fill="#7a5a8a" fill-opacity="0.47"/><circle cx="456.1" cy="218.7" r="0.35" fill="#7a5a8a" fill-opacity="0.33"/><circle cx="362.2" cy="116.2" r="0.35" fill="#7a5a8a" fill-opacity="0.47"/><circle cx="456.3" cy="431.6" r="0.35" fill="#7a5a8a" fill-opacity="0.33"/><circle cx="474.2" cy="184.0" r="0.35" fill="#7a5a8a" fill-opacity="0.21"/><circle cx="622.6" cy="395.1" r="0.35" fill="#7a5a8a" fill-opacity="0.29"/><circle cx="607.3" cy="381.5" r="0.35" fill="#7a5a8a" fill-opacity="0.29"/><circle cx="465.8" cy="431.8" r="0.35" fill="#7a5a8a" fill-opacity="0.35"/><circle cx="631.6" cy="181.8" r="0.35" fill="#7a5a8a" fill-opacity="0.32"/><circle cx="521.1" cy="174.3" r="0.35" fill="#7a5a8a" fill-opacity="0.29"/><circle cx="596.0" cy="266.0" r="0.35" fill="#7a5a8a" fill-opacity="0.44"/><circle cx="294.2" cy="157.6" r="0.35" fill="#7a5a8a" fill-opacity="0.31"/><circle cx="267.1" cy="435.8" r="0.35" fill="#7a5a8a" fill-opacity="0.29"/><circle cx="446.2" cy="137.1" r="0.35" fill="#7a5a8a" fill-opacity="0.36"/><circle cx="362.2" cy="237.7" r="0.35" fill="#7a5a8a" fill-opacity="0.22"/><circle cx="236.9" cy="385.0" r="0.35" fill="#7a5a8a" fill-opacity="0.31"/><circle cx="295.0" cy="163.8" r="0.35" fill="#7a5a8a" fill-opacity="0.29"/><circle cx="291.3" cy="109.3" r="0.35" fill="#7a5a8a" fill-opacity="0.40"/><circle cx="341.1" cy="151.4" r="0.35" fill="#7a5a8a" fill-opacity="0.41"/><circle cx="222.2" cy="191.1" r="0.35" fill="#7a5a8a" fill-opacity="0.45"/><circle cx="239.0" cy="251.6" r="0.35" fill="#7a5a8a" fill-opacity="0.45"/><circle cx="562.4" cy="152.6" r="0.35" fill="#7a5a8a" fill-opacity="0.31"/><circle cx="523.0" cy="228.5" r="0.35" fill="#7a5a8a" fill-opacity="0.49"/><circle cx="277.4" cy="428.6" r="0.35" fill="#7a5a8a" fill-opacity="0.35"/><circle cx="286.5" cy="254.9" r="0.35" fill="#7a5a8a" fill-opacity="0.24"/><circle cx="515.4" cy="188.0" r="0.35" fill="#7a5a8a" fill-opacity="0.47"/><circle cx="458.6" cy="225.4" r="0.35" fill="#7a5a8a" fill-opacity="0.27"/><circle cx="468.5" cy="171.2" r="0.35" fill="#7a5a8a" fill-opacity="0.46"/><circle cx="236.6" cy="275.9" r="0.35" fill="#7a5a8a" fill-opacity="0.36"/><circle cx="307.1" cy="366.1" r="0.35" fill="#7a5a8a" fill-opacity="0.32"/><circle cx="492.0" cy="295.0" r="0.35" fill="#7a5a8a" fill-opacity="0.29"/><circle cx="364.2" cy="127.1" r="0.35" fill="#7a5a8a" fill-opacity="0.25"/><circle cx="584.4" cy="209.0" r="0.35" fill="#7a5a8a" fill-opacity="0.40"/><circle cx="230.0" cy="293.0" r="0.35" fill="#7a5a8a" fill-opacity="0.31"/><circle cx="417.0" cy="200.6" r="0.35" fill="#7a5a8a" fill-opacity="0.22"/><circle cx="326.7" cy="176.0" r="0.35" fill="#7a5a8a" fill-opacity="0.24"/><circle cx="520.3" cy="195.5" r="0.35" fill="#7a5a8a" fill-opacity="0.32"/><circle cx="612.1" cy="367.3" r="0.35" fill="#7a5a8a" fill-opacity="0.46"/><circle cx="589.3" cy="143.2" r="0.35" fill="#7a5a8a" fill-opacity="0.28"/><circle cx="192.1" cy="334.0" r="0.35" fill="#7a5a8a" fill-opacity="0.40"/><circle cx="345.8" cy="240.9" r="0.35" fill="#7a5a8a" fill-opacity="0.40"/><circle cx="512.0" cy="183.7" r="0.35" fill="#7a5a8a" fill-opacity="0.45"/><circle cx="346.2" cy="316.3" r="0.35" fill="#7a5a8a" fill-opacity="0.25"/><circle cx="233.0" cy="415.3" r="0.35" fill="#7a5a8a" fill-opacity="0.42"/><circle cx="518.3" cy="111.2" r="0.35" fill="#7a5a8a" fill-opacity="0.21"/><circle cx="255.4" cy="166.2" r="0.35" fill="#7a5a8a" fill-opacity="0.29"/><circle cx="359.8" cy="110.8" r="0.35" fill="#7a5a8a" fill-opacity="0.29"/><circle cx="482.9" cy="159.7" r="0.35" fill="#7a5a8a" fill-opacity="0.45"/><circle cx="450.3" cy="346.9" r="0.35" fill="#7a5a8a" fill-opacity="0.28"/><circle cx="385.7" cy="335.7" r="0.35" fill="#7a5a8a" fill-opacity="0.30"/><circle cx="178.5" cy="387.9" r="0.35" fill="#7a5a8a" fill-opacity="0.43"/><circle cx="314.8" cy="112.1" r="0.35" fill="#7a5a8a" fill-opacity="0.46"/><circle cx="468.1" cy="113.6" r="0.35" fill="#7a5a8a" fill-opacity="0.27"/><circle cx="231.1" cy="373.0" r="0.35" fill="#7a5a8a" fill-opacity="0.26"/><circle cx="614.8" cy="358.4" r="0.35" fill="#7a5a8a" fill-opacity="0.23"/><circle cx="509.8" cy="234.3" r="0.35" fill="#7a5a8a" fill-opacity="0.42"/><circle cx="573.8" cy="195.1" r="0.35" fill="#7a5a8a" fill-opacity="0.23"/><circle cx="630.0" cy="244.9" r="0.35" fill="#7a5a8a" fill-opacity="0.48"/><circle cx="508.3" cy="354.6" r="0.35" fill="#7a5a8a" fill-opacity="0.45"/><circle cx="478.0" cy="254.9" r="0.35" fill="#7a5a8a" fill-opacity="0.22"/><circle cx="511.5" cy="246.4" r="0.35" fill="#7a5a8a" fill-opacity="0.35"/><circle cx="621.3" cy="141.6" r="0.35" fill="#7a5a8a" fill-opacity="0.43"/><circle cx="198.9" cy="342.1" r="0.35" fill="#7a5a8a" fill-opacity="0.44"/><circle cx="302.7" cy="287.6" r="0.35" fill="#7a5a8a" fill-opacity="0.49"/><circle cx="482.5" cy="286.7" r="0.35" fill="#7a5a8a" fill-opacity="0.27"/><circle cx="206.4" cy="221.8" r="0.35" fill="#7a5a8a" fill-opacity="0.32"/></svg>
</div></div>
<svg class="abs" style="left:684px;top:560px;will-change:transform;" width="76" height="76" viewBox="684 560 76 76" fill="none">
<circle cx="721.3" cy="597.2" r="32.7" stroke="#9a8a62" stroke-opacity="0.42" stroke-width="1.1"/>
<circle cx="721.3" cy="597.2" r="30.1" stroke="#9a8a62" stroke-opacity="0.38" stroke-width="0.9"/>
<path d="M690.4 586.6l2.4 0.9M752.2 586.6l-2.4 0.9M729.6 627.6l-0.6 2.6M712.4 566.4l0.6 2.6M729.6 566.6l-0.6 2.4" stroke="#9a8a62" stroke-opacity="0.6" stroke-width="0.7"/>
<path d="M697 601.8C703 600.6 709 599 722 598.4M700 601.6V593.4M703.4 601V592.6M700 593.4L703.4 592.6M697.4 601.6L700 593.4M703.4 592.6L716 598.6M700 593.6L712 599.2" stroke="#7f8ca6" stroke-opacity="0.5" stroke-width="0.5"/>
<path d="M720.7 582.7L725 580.8L729.4 581.5L731.9 584L735 585.2L736.9 588.3L738.1 591.4L739.6 593.3M740.6 603.6L738.1 608.2L734.4 610.7L730.7 612.5L728.8 609.4L726.9 605.7M722.6 589L720.7 582.7" stroke="#6f88ad" stroke-opacity="0.5" stroke-width="0.5" stroke-linejoin="round"/>
<path d="M706.4 589.6l0.9-1.3 0.9 0.8 0.9-0.8 0.9 1.3z" fill="#8893aa" fill-opacity="0.7"/>
<text x="706.9" y="595.2" font-family="Liberation Serif, serif" font-weight="bold" font-size="6.6" fill="#b9985b" textLength="32.4" lengthAdjust="spacingAndGlyphs">СРПСКИ</text>
<text x="723.8" y="601.2" font-family="Liberation Serif, serif" font-weight="bold" font-size="6.6" fill="#b9985b" textLength="23" lengthAdjust="spacingAndGlyphs">МОСТ</text>
<circle cx="733.2" cy="598.9" r="1.45" fill="#c8601e"/>
<text x="697.4" y="603.9" font-family="Liberation Serif, serif" font-style="italic" font-size="2.1" fill="#b49a64" fill-opacity="0.55" textLength="52" lengthAdjust="spacingAndGlyphs">Иницијатива за бржи евроатлантски и економски развој</text>
</svg>
</body></html>
